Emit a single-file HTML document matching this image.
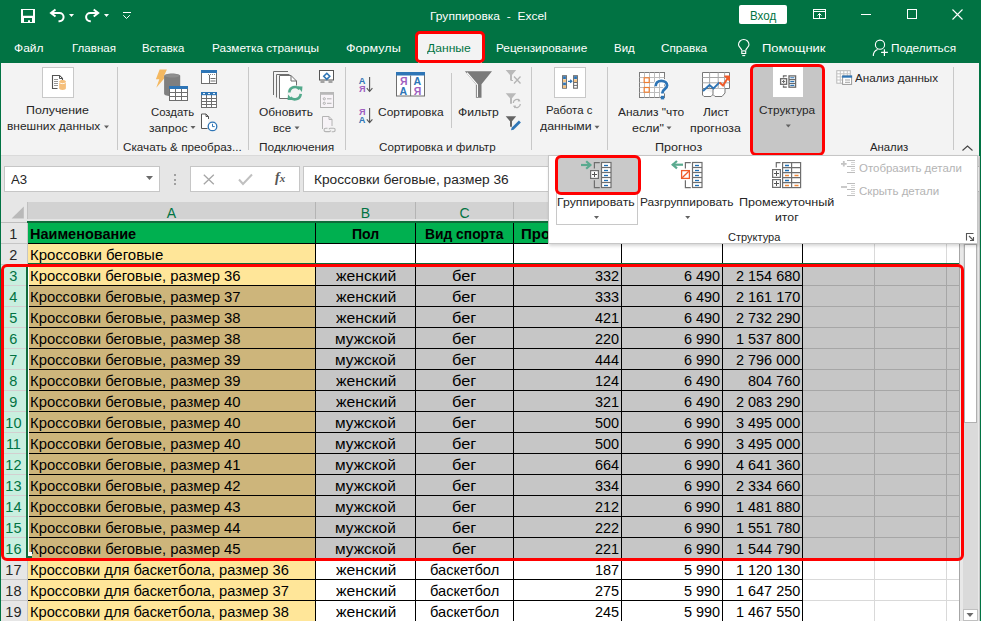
<!DOCTYPE html><html><head><meta charset="utf-8"><style>
html,body{margin:0;padding:0}
body{width:981px;height:621px;overflow:hidden;position:relative;background:#017343;font-family:"Liberation Sans",sans-serif}
.t{position:absolute;white-space:nowrap;line-height:1;font-family:"Liberation Sans",sans-serif}
svg{overflow:visible}
</style></head><body>
<svg style="position:absolute;left:0px;top:0px" width="140" height="30" viewBox="0 0 140 30"><path fill="#fff" fill-rule="evenodd" d="M21 9h14v14H21z M23 10h10v5.7H23z M24 18h8v4h-2v-1.8h-2V22h-4z"/><path d="M55.5 9.5L51 13l4.5 3.5M51 13h8.5a4.1 4.1 0 0 1 0 8.2H58.5" fill="none" stroke="#fff" stroke-width="2"/><path d="M69 14h5l-2.5 3z" fill="#fff"/><path d="M93.7 9.5L98.2 13l-4.5 3.5M98.2 13h-8a4.1 4.1 0 0 0 0 8.2H90.8" fill="none" stroke="#fff" stroke-width="2"/><path d="M104 14h5l-2.5 3z" fill="#fff"/><path d="M123 12.5h8" stroke="#fff" stroke-width="1"/><path d="M123.3 15.2l3.2 3.3 3.3-3.3" fill="none" stroke="#fff" stroke-width="1"/></svg>
<div class="t" style="left:430.41px;top:10.50px;font-size:11px;color:#fff;font-weight:400;transform:scaleX(1.0918);transform-origin:0 0;">Группировка&nbsp;&nbsp;-&nbsp;&nbsp;Excel</div>
<div style="position:absolute;left:739px;top:5px;width:48px;height:19px;background:#fff;border-radius:2px"></div>
<div class="t" style="left:749.55px;top:10.00px;font-size:12.5px;color:#017343;font-weight:400;transform:scaleX(0.9241);transform-origin:0 0;">Вход</div>
<svg style="position:absolute;left:813px;top:9px" width="14" height="11" viewBox="0 0 14 11"><rect x="0.5" y="0.5" width="12" height="9" fill="none" stroke="#fff" stroke-width="1"/><path d="M0.5 2.5h12" stroke="#fff"/><path d="M6.5 9V4.5M4.5 6.5l2-2 2 2" fill="none" stroke="#fff"/></svg>
<div style="position:absolute;left:861px;top:14px;width:10px;height:1px;background:#fff"></div>
<div style="position:absolute;left:907px;top:9px;width:10px;height:10px;border:1px solid #fff;box-sizing:border-box"></div>
<svg style="position:absolute;left:952px;top:9px" width="12" height="11" viewBox="0 0 12 11"><path d="M0.5 0.5l10 10M10.5 0.5l-10 10" stroke="#fff" stroke-width="1.1"/></svg>
<div class="t" style="left:14.01px;top:43.00px;font-size:11.5px;color:#fff;font-weight:400;transform:scaleX(1.0443);transform-origin:0 0;">Файл</div>
<div class="t" style="left:71.65px;top:43.00px;font-size:11.5px;color:#fff;font-weight:400;transform:scaleX(1.0053);transform-origin:0 0;">Главная</div>
<div class="t" style="left:142.37px;top:43.00px;font-size:11.5px;color:#fff;font-weight:400;transform:scaleX(0.9910);transform-origin:0 0;">Вставка</div>
<div class="t" style="left:211.53px;top:43.00px;font-size:11.5px;color:#fff;font-weight:400;transform:scaleX(1.0249);transform-origin:0 0;">Разметка страницы</div>
<div class="t" style="left:345.78px;top:43.00px;font-size:11.5px;color:#fff;font-weight:400;transform:scaleX(1.0923);transform-origin:0 0;">Формулы</div>
<div class="t" style="left:496.33px;top:43.00px;font-size:11.5px;color:#fff;font-weight:400;transform:scaleX(1.0271);transform-origin:0 0;">Рецензирование</div>
<div class="t" style="left:614.26px;top:43.00px;font-size:11.5px;color:#fff;font-weight:400;transform:scaleX(0.9967);transform-origin:0 0;">Вид</div>
<div class="t" style="left:661.30px;top:43.00px;font-size:11.5px;color:#fff;font-weight:400;transform:scaleX(1.0231);transform-origin:0 0;">Справка</div>
<div class="t" style="left:762.35px;top:43.00px;font-size:11.5px;color:#fff;font-weight:400;transform:scaleX(1.1291);transform-origin:0 0;">Помощник</div>
<div class="t" style="left:891.35px;top:43.00px;font-size:11.5px;color:#fff;font-weight:400;transform:scaleX(1.0239);transform-origin:0 0;">Поделиться</div>
<div style="position:absolute;left:418px;top:34px;width:64px;height:29px;background:#f3f3f3"></div>
<div class="t" style="left:427.11px;top:43.00px;font-size:11.5px;color:#017343;font-weight:400;transform:scaleX(1.0549);transform-origin:0 0;">Данные</div>
<div style="position:absolute;left:415px;top:31px;width:70px;height:32px;border:3px solid #f00;border-radius:5px;box-sizing:border-box"></div>
<svg style="position:absolute;left:736px;top:38px" width="15" height="20" viewBox="736 38 15 20"><path d="M741.8 50.3c-.8-2.3-3.3-3.6-3.3-5.6a5.25 5.25 0 0 1 10.5 0c0 2-2.5 3.3-3.3 5.6" fill="none" stroke="#fff" stroke-width="1.1"/><rect x="741.8" y="50.9" width="3.9" height="2.6" fill="none" stroke="#fff" stroke-width="1.1"/><path d="M742.3 55.6h2.9" stroke="#fff" stroke-width="1.1"/></svg>
<svg style="position:absolute;left:871px;top:38px" width="19" height="20" viewBox="871 38 19 20"><circle cx="880" cy="44.7" r="4.6" fill="none" stroke="#fff" stroke-width="1.1"/><path d="M877.6 49.4c-2.6.9-4.3 3.3-4.3 6.6" fill="none" stroke="#fff" stroke-width="1.1"/><path d="M881.1 52.4h6.8M884.4 49.3v6.6" stroke="#fff" stroke-width="1.2"/></svg>
<div style="position:absolute;left:1px;top:63px;width:978px;height:92px;background:#f3f3f3"></div>
<div style="position:absolute;left:1px;top:155px;width:978px;height:1px;background:#dadada"></div>
<div style="position:absolute;left:117px;top:67px;width:1px;height:83px;background:#c8c8c8"></div>
<div style="position:absolute;left:248px;top:67px;width:1px;height:83px;background:#c8c8c8"></div>
<div style="position:absolute;left:345px;top:67px;width:1px;height:83px;background:#c8c8c8"></div>
<div style="position:absolute;left:531px;top:67px;width:1px;height:83px;background:#c8c8c8"></div>
<div style="position:absolute;left:607px;top:67px;width:1px;height:83px;background:#c8c8c8"></div>
<div style="position:absolute;left:953px;top:67px;width:1px;height:83px;background:#c8c8c8"></div>
<div style="position:absolute;left:451px;top:73px;width:1px;height:55px;background:#c8c8c8"></div>
<div style="position:absolute;left:42px;top:67px;width:32px;height:31px;background:#fff;border:1.5px solid #c8c8c8;box-sizing:border-box"></div>
<svg style="position:absolute;left:50px;top:73px" width="18" height="18" viewBox="50 73 18 18"><path d="M57.5 88.5H52.5V75.5h7l3 3V80" fill="#fff" stroke="#555" stroke-width="1.1"/><path d="M59.5 75.5v3h3z" fill="#fff" stroke="#555" stroke-width="1"/><path d="M54 79.5h4M54 81.5h4M54 83.5h4M54 85.5h4" stroke="#8c8c8c" stroke-width="0.9"/><path d="M59.2 81.5c0-1 1.5-1.6 3.35-1.6s3.35.6 3.35 1.6v6.8c0 1-1.5 1.6-3.35 1.6s-3.35-.6-3.35-1.6z" fill="#f5bf7b"/><path d="M59.4 82.6c.6.7 1.7 1 3.15 1s2.6-.3 3.15-1" fill="none" stroke="#fff" stroke-width="0.9"/></svg>
<div class="t" style="left:26.40px;top:105.00px;font-size:11.5px;color:#262626;font-weight:400;transform:scaleX(1.0762);transform-origin:0 0;">Получение</div>
<div class="t" style="left:6.87px;top:121.00px;font-size:11.5px;color:#262626;font-weight:400;transform:scaleX(1.0405);transform-origin:0 0;">внешних данных</div>
<svg style="position:absolute;left:104px;top:125px" width="6" height="4" viewBox="104 125 6 4"><path d="M104 125.5h5l-2.5 3z" fill="#616161"/></svg>
<div class="t" style="left:122.81px;top:142.00px;font-size:11.5px;color:#262626;font-weight:400;transform:scaleX(1.0168);transform-origin:0 0;">Скачать &amp; преобраз...</div>
<svg style="position:absolute;left:155px;top:68px" width="36" height="34" viewBox="155 68 36 34"><path d="M159.6 69.5h7.3l-3.2 7h2.2l-9.6 11.2 3-8.5h-3.4z" fill="#f4b860"/><path d="M164.1 75.8c0-1.4 3.6-2.4 8.05-2.4s8.05 1 8.05 2.4v18c0 1.4-3.6 2.4-8.05 2.4s-8.05-1-8.05-2.4z" fill="#7f7f7f"/><ellipse cx="172.15" cy="75.8" rx="7.2" ry="1.7" fill="#8e8e8e"/><rect x="169.5" y="86.5" width="18" height="14" fill="#fff" stroke="#6e6e6e"/><rect x="169" y="86" width="19" height="3" fill="#2e75b6"/><path d="M169.5 92.5h18M169.5 96.5h18M175.5 89v11.5M181.5 89v11.5" stroke="#6e6e6e" stroke-width="1"/></svg>
<div class="t" style="left:150.72px;top:106.50px;font-size:11.5px;color:#262626;font-weight:400;transform:scaleX(0.9865);transform-origin:0 0;">Создать</div>
<div class="t" style="left:148.61px;top:123.00px;font-size:11.5px;color:#262626;font-weight:400;transform:scaleX(1.0569);transform-origin:0 0;">запрос</div>
<svg style="position:absolute;left:190px;top:125px" width="6" height="4" viewBox="190 125 6 4"><path d="M190.5 126h5l-2.5 3z" fill="#616161"/></svg>
<svg style="position:absolute;left:200px;top:69px" width="19" height="64" viewBox="200 69 19 64"><rect x="201.5" y="70.5" width="15" height="13" fill="#fff" stroke="#6e6e6e"/><rect x="201" y="70" width="16" height="3" fill="#2e75b6"/><path d="M209.5 75v8.5M210.5 78.5h5M210.5 81h5" stroke="#6e6e6e"/><path d="M208 74.5h1M210 74.5h1M212 74.5h1M214 74.5h1" stroke="#8a8a8a"/><rect x="201.5" y="92.5" width="15" height="15" fill="#fff" stroke="#6e6e6e"/><rect x="201" y="92" width="16" height="3.2" fill="#2e75b6"/><path d="M203 93.6h2M208 93.6h2M213 93.6h2" stroke="#fff" stroke-width="1"/><path d="M201.5 98.5h15M201.5 101.5h15M201.5 104.5h15M206.5 95v12.5M211.5 95v12.5" stroke="#6e6e6e"/><path d="M208.5 119V116.5l-2.5-2.5h-4.5v14.5h6" fill="#fff" stroke="#555"/><path d="M206 114v2.5h2.5" fill="none" stroke="#555"/><circle cx="212.5" cy="126.4" r="4.3" fill="#fff" stroke="#2e75b6" stroke-width="1.3"/><path d="M212.5 123.8v2.8h2.2" fill="none" stroke="#2e75b6" stroke-width="1"/></svg>
<svg style="position:absolute;left:270px;top:69px" width="36" height="34" viewBox="270 69 36 34"><path d="M273.5 95V71.5h14.5" fill="none" stroke="#6e6e6e"/><path d="M276.5 97.5V74.5h13" fill="none" stroke="#6e6e6e"/><path d="M279.5 98.5V75.5h11.5l5.5 5.5v17.5z" fill="#fff" stroke="#6e6e6e"/><path d="M291 75.5v5.5h5.5" fill="none" stroke="#6e6e6e"/><circle cx="295" cy="93.2" r="8" fill="#f3f3f3"/><path d="M289.3 92.5a5.8 5.8 0 0 1 10.3-3.3" fill="none" stroke="#52a98b" stroke-width="2.6"/><path d="M300.7 93.9a5.8 5.8 0 0 1-10.3 3.3" fill="none" stroke="#52a98b" stroke-width="2.6"/><path d="M297.3 86.3l5.2 .2-.6 5.4z" fill="#52a98b"/><path d="M292.7 100.1l-5.2-.2.6-5.4z" fill="#52a98b"/></svg>
<div class="t" style="left:259.04px;top:106.50px;font-size:11.5px;color:#262626;font-weight:400;transform:scaleX(1.0362);transform-origin:0 0;">Обновить</div>
<div class="t" style="left:273.00px;top:123.00px;font-size:11.5px;color:#262626;font-weight:400;transform:scaleX(0.9972);transform-origin:0 0;">все</div>
<svg style="position:absolute;left:294px;top:125px" width="6" height="5" viewBox="294 125 6 5"><path d="M294.5 126.5h5l-2.5 3z" fill="#616161"/></svg>
<svg style="position:absolute;left:318px;top:69px" width="19" height="64" viewBox="318 69 19 64"><rect x="319.5" y="70.5" width="14" height="9.5" fill="#fff" stroke="#555"/><path d="M320.5 82h4M328.5 82h4" stroke="#555" stroke-width="1.2"/><path d="M326.8 73.3l3 3-3 3-3-3z" fill="none" stroke="#2e75b6" stroke-width="1.6"/><rect x="320.5" y="92.5" width="13" height="15" fill="#f7f3f7" stroke="#b4b4b4"/><rect x="320" y="92" width="14" height="2.8" fill="#b8b8b8"/><circle cx="324.3" cy="98.8" r="1.1" fill="none" stroke="#b0b0b0"/><circle cx="324.3" cy="103.3" r="1.1" fill="none" stroke="#b0b0b0"/><path d="M327 98.8h4.5M327 103.3h4.5" stroke="#b0b0b0"/><path d="M322.5 129V116.5h6.5l3 3V126" fill="#f7f3f7" stroke="#b4b4b4"/><path d="M329 116.5v3h3" fill="none" stroke="#b4b4b4"/><path d="M327.5 128.2h-1.8a1.7 1.7 0 0 0 0 3.4h3.6a1.7 1.7 0 0 0 1.5-1M329 129.3a1.7 1.7 0 0 1 1.5-1h3a1.7 1.7 0 0 1 0 3.4h-1.8" fill="none" stroke="#b4b4b4" stroke-width="1.1"/></svg>
<div class="t" style="left:258.64px;top:142.00px;font-size:11.5px;color:#262626;font-weight:400;transform:scaleX(1.0336);transform-origin:0 0;">Подключения</div>
<div class="t" style="left:358.8px;top:77.2px;font-size:9.2px;font-weight:700;color:#2e75b6">A</div>
<div class="t" style="left:359.0px;top:85.0px;font-size:9.2px;font-weight:700;color:#9f5fbf">Я</div>
<div class="t" style="left:359.0px;top:108.0px;font-size:9.2px;font-weight:700;color:#9f5fbf">Я</div>
<div class="t" style="left:358.8px;top:116.4px;font-size:9.2px;font-weight:700;color:#2e75b6">A</div>
<svg style="position:absolute;left:365px;top:75px" width="10" height="50" viewBox="365 75 10 50"><path d="M369.6 77v14.3M366.8 88.2l2.8 3.3 2.8-3.3" fill="none" stroke="#555" stroke-width="1.1"/><path d="M369.6 108v14.6M366.8 119.4l2.8 3.3 2.8-3.3" fill="none" stroke="#555" stroke-width="1.1"/></svg>
<svg style="position:absolute;left:395px;top:71px" width="32" height="27" viewBox="395 71 32 27"><rect x="396.5" y="72.5" width="28" height="23.5" fill="#fff" stroke="#6e6e6e"/><rect x="396" y="72" width="29" height="3.5" fill="#2e75b6"/><path d="M410.6 75.5v20.5" stroke="#6e6e6e"/></svg>
<div class="t" style="left:399.9px;top:75.6px;font-size:10.5px;font-weight:700;color:#9f5fbf">Я</div>
<div class="t" style="left:399.5px;top:86.3px;font-size:10.5px;font-weight:700;color:#2e75b6">A</div>
<div class="t" style="left:413.4px;top:75.6px;font-size:10.5px;font-weight:700;color:#2e75b6">A</div>
<div class="t" style="left:413.8px;top:86.3px;font-size:10.5px;font-weight:700;color:#9f5fbf">Я</div>
<div class="t" style="left:378.09px;top:106.80px;font-size:11.5px;color:#262626;font-weight:400;transform:scaleX(1.0395);transform-origin:0 0;">Сортировка</div>
<svg style="position:absolute;left:463px;top:69px" width="32" height="31" viewBox="463 69 32 31"><path d="M464.9 71.2H492L481.5 84.2v13.5h-5.6V84.2z" fill="#7a7a7a"/><path d="M467 72.6l10.4 12.2V97" fill="none" stroke="#fff" stroke-width="1.1"/></svg>
<div class="t" style="left:457.70px;top:106.80px;font-size:11.5px;color:#262626;font-weight:400;transform:scaleX(1.0577);transform-origin:0 0;">Фильтр</div>
<svg style="position:absolute;left:504px;top:69px" width="19" height="64" viewBox="504 69 19 64"><path d="M505.7 70h10.5l-4.2 5v5.5h-2V75z" fill="#b9b9b9"/><path d="M511 80.5h2" stroke="#b9b9b9"/><path d="M514 76.5l6.5 7M520.5 76.5l-6.5 7" stroke="#b4b4b4" stroke-width="1.3"/><path d="M505.7 93.2h10.5l-4.2 5v5.5h-2v-5.5z" fill="#b9b9b9"/><path d="M513.3 103a3.6 3.6 0 0 1 6.3-2.3M520.3 104a3.6 3.6 0 0 1-6.3 2.3" fill="none" stroke="#b4b4b4" stroke-width="1.3"/><path d="M518.6 98.6l2 2.6-2.9.4zM515 108.4l-2-2.6 2.9-.4z" fill="#b4b4b4"/><path d="M505.7 116.3h10.5l-4.2 5v5.5h-2v-5.5z" fill="#646464"/><path d="M511 130.3l.6-2.6 7.3-7.3 2 2-7.3 7.3z" fill="#2e75b6"/></svg>
<div class="t" style="left:378.91px;top:142.00px;font-size:11.5px;color:#262626;font-weight:400;transform:scaleX(1.0121);transform-origin:0 0;">Сортировка и фильтр</div>
<div style="position:absolute;left:554px;top:67px;width:32px;height:31px;background:#fff;border:1.5px solid #c8c8c8;box-sizing:border-box"></div>
<svg style="position:absolute;left:560px;top:73px" width="20" height="18" viewBox="560 73 20 18"><rect x="562.6" y="75.7" width="3.8" height="12.5" fill="#fff" stroke="#6e6e6e" stroke-width="1.1"/><rect x="563.1" y="76.2" width="2.8" height="2.8" fill="#2e75b6"/><rect x="563.1" y="79.4" width="2.8" height="2.8" fill="#f5bf7b"/><rect x="563.1" y="82.6" width="2.8" height="2.8" fill="#2e75b6"/><rect x="563.1" y="85.4" width="2.8" height="2.6" fill="#f5bf7b"/><rect x="573.6" y="75.7" width="3.8" height="12.5" fill="#fff" stroke="#6e6e6e" stroke-width="1.1"/><rect x="574.1" y="76.2" width="2.8" height="2.8" fill="#2e75b6"/><rect x="574.1" y="79.4" width="2.8" height="2.8" fill="#f5bf7b"/><path d="M573.6 82.5h3.8M573.6 85.4h3.8" stroke="#6e6e6e"/><path d="M568 81.3h3.5M570.2 79.8l1.6 1.5-1.6 1.5" fill="none" stroke="#2e75b6" stroke-width="1.2"/></svg>
<div class="t" style="left:545.57px;top:105.00px;font-size:11.5px;color:#262626;font-weight:400;transform:scaleX(0.9890);transform-origin:0 0;">Работа с</div>
<div class="t" style="left:539.88px;top:121.00px;font-size:11.5px;color:#262626;font-weight:400;transform:scaleX(1.0675);transform-origin:0 0;">данными</div>
<svg style="position:absolute;left:594px;top:125px" width="6" height="4" viewBox="594 125 6 4"><path d="M594.5 125.8h5l-2.5 3z" fill="#616161"/></svg>
<svg style="position:absolute;left:637px;top:70px" width="34" height="33" viewBox="637 70 34 33"><rect x="639.5" y="72.5" width="25" height="25" fill="#fff" stroke="#7a7a7a"/><path d="M639.5 77.5h25M639.5 82.5h25M639.5 87.5h25M639.5 92.5h25M644.5 72.5v25M649.5 72.5v25M654.5 72.5v25M659.5 72.5v25" stroke="#bdbdbd"/><rect x="644.2" y="77.8" width="5" height="4.7" fill="#fff" stroke="#ed7d31" stroke-width="1.2"/><rect x="644.2" y="87.5" width="5" height="4.7" fill="#fff" stroke="#ed7d31" stroke-width="1.2"/><path d="M655.6 86.2c0-3.4 2.5-5.4 5.7-5.4 3.3 0 5.8 2 5.8 4.8 0 3.4-4.6 3.6-4.6 6.9v1" fill="none" stroke="#fff" stroke-width="4.6"/><path d="M655.6 86.2c0-3.4 2.5-5.4 5.7-5.4 3.3 0 5.8 2 5.8 4.8 0 3.4-4.6 3.6-4.6 6.9v1" fill="none" stroke="#2e75b6" stroke-width="2.8"/><rect x="660.8" y="95.8" width="3.4" height="3.6" fill="#2e75b6"/></svg>
<div class="t" style="left:618.38px;top:106.80px;font-size:11.5px;color:#262626;font-weight:400;transform:scaleX(1.0403);transform-origin:0 0;">Анализ "что</div>
<div class="t" style="left:632.07px;top:123.00px;font-size:11.5px;color:#262626;font-weight:400;transform:scaleX(1.0851);transform-origin:0 0;">если"</div>
<svg style="position:absolute;left:666px;top:126px" width="6" height="4" viewBox="666 126 6 4"><path d="M666.5 126.5h5l-2.5 3z" fill="#616161"/></svg>
<svg style="position:absolute;left:701px;top:71px" width="31" height="28" viewBox="701 71 31 28"><path d="M702.5 72.5h27v16h-27z" fill="#fff" stroke="#777"/><path d="M702.5 77.5h27M702.5 82.8h27M709.6 72.5v16M718.2 72.5v16M724.6 72.5v16" stroke="#a8a8a8"/><path d="M702.5 88.5v6.5l1.5 1.5h7l2.5-2.5h1.5" fill="#fff" stroke="#777"/><path d="M713 88.5v6l2 2h7l3-3.5V88.5" fill="#fff" stroke="#777"/><path d="M703 91l6.5-6 4 3.4 6-6" fill="none" stroke="#2e75b6" stroke-width="2"/><path d="M719.5 82.5l3.5 3 5.5-8.5" fill="none" stroke="#f05a28" stroke-width="2"/><path d="M724.5 76h5v5z" fill="#f05a28" stroke="#f05a28" stroke-width="1"/></svg>
<div class="t" style="left:703.09px;top:107.00px;font-size:11.5px;color:#262626;font-weight:400;transform:scaleX(1.0409);transform-origin:0 0;">Лист</div>
<div class="t" style="left:689.85px;top:123.00px;font-size:11.5px;color:#262626;font-weight:400;transform:scaleX(1.0698);transform-origin:0 0;">прогноза</div>
<div class="t" style="left:655.38px;top:142.00px;font-size:11.5px;color:#262626;font-weight:400;transform:scaleX(1.0953);transform-origin:0 0;">Прогноз</div>
<div style="position:absolute;left:750px;top:64px;width:75px;height:92px;background:#c6c6c6;border:3px solid #f00;border-radius:6px;box-sizing:border-box"></div>
<div style="position:absolute;left:773px;top:67px;width:30px;height:30px;background:#fff"></div>
<svg style="position:absolute;left:778px;top:73px" width="20" height="17" viewBox="778 73 20 17"><rect x="780.6" y="78.7" width="6" height="5.6" fill="#fff" stroke="#6a6a6a" stroke-width="1.3"/><path d="M783.6 79.9v3.2M782 81.5h3.2" stroke="#6a6a6a" stroke-width="1.1"/><path d="M786.8 75.8h-3.3v1.8M783.5 85.5v1.7h3.3" fill="none" stroke="#6a6a6a" stroke-width="1.3"/><rect x="789" y="75.9" width="6.6" height="11.3" fill="#fff" stroke="#6a6a6a" stroke-width="1.3"/><path d="M789 79.7h6.6M789 83.5h6.6" stroke="#6a6a6a" stroke-width="1.2"/><path d="M790.3 77.8h4M790.3 81.6h4M790.3 85.4h4" stroke="#2e75b6" stroke-width="1.1"/></svg>
<div class="t" style="left:759.40px;top:105.00px;font-size:11.5px;color:#262626;font-weight:400;transform:scaleX(1.0283);transform-origin:0 0;">Структура</div>
<svg style="position:absolute;left:785px;top:124px" width="7" height="4" viewBox="785 124 7 4"><path d="M785.8 124.5h5l-2.5 3z" fill="#616161"/></svg>
<svg style="position:absolute;left:835px;top:69px" width="19" height="17" viewBox="835 69 19 17"><rect x="836.8" y="70.7" width="13.5" height="12.5" fill="#fff" stroke="#b8b8b8"/><path d="M836.8 73.8h13.5M836.8 76.9h13.5M836.8 80h13.5M840.3 70.7v12.5M843.8 70.7v12.5M847.3 70.7v12.5" stroke="#c4c4c4"/><rect x="842.6" y="76" width="9" height="8.4" fill="#fff" stroke="#999"/><rect x="842.1" y="75.5" width="10" height="2.2" fill="#2e75b6"/><path d="M845 80h5M845 82.3h5" stroke="#999" stroke-width="0.9"/></svg>
<div class="t" style="left:855.28px;top:72.70px;font-size:11.5px;color:#262626;font-weight:400;transform:scaleX(1.0147);transform-origin:0 0;">Анализ данных</div>
<div class="t" style="left:869.98px;top:142.00px;font-size:11.5px;color:#262626;font-weight:400;transform:scaleX(0.9852);transform-origin:0 0;">Анализ</div>
<svg style="position:absolute;left:960px;top:144px" width="15" height="9" viewBox="960 144 15 9"><path d="M962.5 150.5l5-4.5 5 4.5" fill="none" stroke="#444" stroke-width="1.1"/></svg>
<div style="position:absolute;left:1px;top:156px;width:978px;height:46px;background:#e6e6e6"></div>
<div style="position:absolute;left:4px;top:166px;width:156px;height:26px;background:#fff;border:1px solid #c6c6c6;box-sizing:border-box"></div>
<div class="t" style="left:11.27px;top:173.80px;font-size:12px;color:#262626;font-weight:400;transform:scaleX(1.0972);transform-origin:0 0;">A3</div>
<svg style="position:absolute;left:146px;top:176px" width="8" height="4" viewBox="0 0 8 4"><path d="M0 0h7l-3.5 4z" fill="#6a6a6a"/></svg>
<div style="position:absolute;left:174px;top:174px;width:2px;height:2px;background:#a0a0a0"></div>
<div style="position:absolute;left:174px;top:178.5px;width:2px;height:2px;background:#a0a0a0"></div>
<div style="position:absolute;left:174px;top:183px;width:2px;height:2px;background:#a0a0a0"></div>
<div style="position:absolute;left:190px;top:166px;width:110px;height:26px;background:#fff;border:1px solid #c6c6c6;box-sizing:border-box"></div>
<svg style="position:absolute;left:203px;top:174px" width="12" height="11" viewBox="0 0 12 11"><path d="M0.8 0.8l10 9.5M10.8 0.8l-10 9.5" stroke="#a6a6a6" stroke-width="1.3"/></svg>
<svg style="position:absolute;left:238px;top:174px" width="15" height="11" viewBox="0 0 15 11"><path d="M1 5.5l4 4.5 9-9.5" fill="none" stroke="#c0c0c0" stroke-width="2"/></svg>
<div class="t" style="left:275px;top:170.5px;font-family:'Liberation Serif';font-style:italic;font-weight:700;font-size:14px;color:#555">f<span style="font-size:11px">x</span></div>
<div style="position:absolute;left:303px;top:166px;width:676px;height:26px;background:#fff;border:1px solid #c6c6c6;border-right:none;box-sizing:border-box"></div>
<div class="t" style="left:314.17px;top:173.70px;font-size:12.3px;color:#262626;font-weight:400;transform:scaleX(1.1155);transform-origin:0 0;">Кроссовки беговые, размер 36</div>
<div style="position:absolute;left:1px;top:202px;width:978px;height:419px;background:#fff"></div>
<div style="position:absolute;left:27px;top:202px;width:933px;height:19px;background:#d2d2d2"></div>
<div style="position:absolute;left:1px;top:202px;width:26px;height:21px;background:#e6e6e6"></div>
<div style="position:absolute;left:1px;top:222px;width:26px;height:1px;background:#bdbdbd"></div>
<svg style="position:absolute;left:11px;top:206px" width="14" height="14" viewBox="11 206 14 14"><path d="M23.8 206.4v12.2H11.6z" fill="#b9b9b9"/></svg>
<div style="position:absolute;left:27px;top:202px;width:1px;height:21px;background:#c0c0c0"></div>
<div style="position:absolute;left:315px;top:202px;width:1px;height:19px;background:#b4b4b4"></div>
<div class="t" style="left:-28.5px;width:400px;text-align:center;top:206.00px;font-size:14px;color:#017343;font-weight:400;">A</div>
<div style="position:absolute;left:415px;top:202px;width:1px;height:19px;background:#b4b4b4"></div>
<div class="t" style="left:165.5px;width:400px;text-align:center;top:206.00px;font-size:14px;color:#017343;font-weight:400;">B</div>
<div style="position:absolute;left:513px;top:202px;width:1px;height:19px;background:#b4b4b4"></div>
<div class="t" style="left:264.5px;width:400px;text-align:center;top:206.00px;font-size:14px;color:#017343;font-weight:400;">C</div>
<div style="position:absolute;left:621px;top:202px;width:1px;height:19px;background:#b4b4b4"></div>
<div class="t" style="left:367.5px;width:400px;text-align:center;top:206.00px;font-size:14px;color:#017343;font-weight:400;">D</div>
<div style="position:absolute;left:722px;top:202px;width:1px;height:19px;background:#b4b4b4"></div>
<div class="t" style="left:472.0px;width:400px;text-align:center;top:206.00px;font-size:14px;color:#017343;font-weight:400;">E</div>
<div style="position:absolute;left:802px;top:202px;width:1px;height:19px;background:#b4b4b4"></div>
<div class="t" style="left:562.5px;width:400px;text-align:center;top:206.00px;font-size:14px;color:#017343;font-weight:400;">F</div>
<div style="position:absolute;left:874px;top:202px;width:1px;height:19px;background:#b4b4b4"></div>
<div class="t" style="left:638.5px;width:400px;text-align:center;top:206.00px;font-size:14px;color:#017343;font-weight:400;">G</div>
<div style="position:absolute;left:946px;top:202px;width:1px;height:19px;background:#b4b4b4"></div>
<div class="t" style="left:710.5px;width:400px;text-align:center;top:206.00px;font-size:14px;color:#017343;font-weight:400;">H</div>
<div style="position:absolute;left:959px;top:202px;width:1px;height:19px;background:#b4b4b4"></div>
<div class="t" style="left:753.0px;width:400px;text-align:center;top:206.00px;font-size:14px;color:#017343;font-weight:400;">I</div>
<div style="position:absolute;left:27px;top:219px;width:933px;height:2px;background:#e4e4e4"></div>
<div style="position:absolute;left:27px;top:221px;width:933px;height:2px;background:#0f6b3a"></div>
<div style="position:absolute;left:1px;top:223px;width:26px;height:21px;background:#e6e6e6"></div>
<div style="position:absolute;left:1px;top:243px;width:26px;height:1px;background:#c6c6c6"></div>
<div style="position:absolute;left:27px;top:223px;width:1px;height:21px;background:#c6c6c6"></div>
<div class="t" style="left:-186.6px;width:400px;text-align:center;top:227.00px;font-size:14.5px;color:#262626;font-weight:400;">1</div>
<div style="position:absolute;left:28px;top:223px;width:288px;height:21px;background:#00b050"></div>
<div style="position:absolute;left:316px;top:223px;width:100px;height:21px;background:#00b050"></div>
<div style="position:absolute;left:416px;top:223px;width:98px;height:21px;background:#00b050"></div>
<div style="position:absolute;left:514px;top:223px;width:108px;height:21px;background:#00b050"></div>
<div style="position:absolute;left:622px;top:223px;width:101px;height:21px;background:#00b050"></div>
<div style="position:absolute;left:723px;top:223px;width:80px;height:21px;background:#00b050"></div>
<div style="position:absolute;left:803px;top:223px;width:72px;height:21px;background:#fff"></div>
<div style="position:absolute;left:875px;top:223px;width:72px;height:21px;background:#fff"></div>
<div style="position:absolute;left:947px;top:223px;width:13px;height:21px;background:#fff"></div>
<div style="position:absolute;left:803px;top:243px;width:157px;height:1px;background:#d9d9d9"></div>
<div style="position:absolute;left:874px;top:223px;width:1px;height:21px;background:#d9d9d9"></div>
<div style="position:absolute;left:946px;top:223px;width:1px;height:21px;background:#d9d9d9"></div>
<div style="position:absolute;left:959px;top:223px;width:1px;height:21px;background:#d9d9d9"></div>
<div style="position:absolute;left:28px;top:243px;width:775px;height:1px;background:#000"></div>
<div style="position:absolute;left:315px;top:223px;width:1px;height:21px;background:#000"></div>
<div style="position:absolute;left:415px;top:223px;width:1px;height:21px;background:#000"></div>
<div style="position:absolute;left:513px;top:223px;width:1px;height:21px;background:#000"></div>
<div style="position:absolute;left:621px;top:223px;width:1px;height:21px;background:#000"></div>
<div style="position:absolute;left:722px;top:223px;width:1px;height:21px;background:#000"></div>
<div style="position:absolute;left:802px;top:223px;width:1px;height:21px;background:#000"></div>
<div class="t" style="left:29.63px;top:226.00px;font-size:15px;font-weight:700;color:#000;transform:scaleX(0.9648);transform-origin:0 0">Наименование</div>
<div class="t" style="left:351.86px;top:226.00px;font-size:15px;font-weight:700;color:#000;transform:scaleX(0.9372);transform-origin:0 0">Пол</div>
<div class="t" style="left:424.57px;top:226.00px;font-size:15px;font-weight:700;color:#000;transform:scaleX(0.9222);transform-origin:0 0">Вид спорта</div>
<div class="t" style="left:521.00px;top:226.00px;font-size:15px;font-weight:700;color:#000;transform:scaleX(1.0000);transform-origin:0 0">Продажи</div>
<div style="position:absolute;left:1px;top:244px;width:26px;height:21px;background:#e6e6e6"></div>
<div style="position:absolute;left:1px;top:264px;width:26px;height:1px;background:#c6c6c6"></div>
<div style="position:absolute;left:27px;top:244px;width:1px;height:21px;background:#c6c6c6"></div>
<div class="t" style="left:-186.6px;width:400px;text-align:center;top:248.00px;font-size:14.5px;color:#262626;font-weight:400;">2</div>
<div style="position:absolute;left:28px;top:244px;width:288px;height:21px;background:#ffe699"></div>
<div style="position:absolute;left:316px;top:244px;width:100px;height:21px;background:#fff"></div>
<div style="position:absolute;left:416px;top:244px;width:98px;height:21px;background:#fff"></div>
<div style="position:absolute;left:514px;top:244px;width:108px;height:21px;background:#fff"></div>
<div style="position:absolute;left:622px;top:244px;width:101px;height:21px;background:#fff"></div>
<div style="position:absolute;left:723px;top:244px;width:80px;height:21px;background:#fff"></div>
<div style="position:absolute;left:803px;top:244px;width:72px;height:21px;background:#fff"></div>
<div style="position:absolute;left:875px;top:244px;width:72px;height:21px;background:#fff"></div>
<div style="position:absolute;left:947px;top:244px;width:13px;height:21px;background:#fff"></div>
<div style="position:absolute;left:803px;top:264px;width:157px;height:1px;background:#d9d9d9"></div>
<div style="position:absolute;left:874px;top:244px;width:1px;height:21px;background:#d9d9d9"></div>
<div style="position:absolute;left:946px;top:244px;width:1px;height:21px;background:#d9d9d9"></div>
<div style="position:absolute;left:959px;top:244px;width:1px;height:21px;background:#d9d9d9"></div>
<div style="position:absolute;left:28px;top:264px;width:775px;height:1px;background:#000"></div>
<div style="position:absolute;left:315px;top:244px;width:1px;height:21px;background:#000"></div>
<div style="position:absolute;left:415px;top:244px;width:1px;height:21px;background:#000"></div>
<div style="position:absolute;left:513px;top:244px;width:1px;height:21px;background:#000"></div>
<div style="position:absolute;left:621px;top:244px;width:1px;height:21px;background:#000"></div>
<div style="position:absolute;left:722px;top:244px;width:1px;height:21px;background:#000"></div>
<div style="position:absolute;left:802px;top:244px;width:1px;height:21px;background:#000"></div>
<div class="t" style="left:29.87px;top:247.00px;font-size:15px;font-weight:400;color:#000;transform:scaleX(0.9990);transform-origin:0 0">Кроссовки беговые</div>
<div style="position:absolute;left:1px;top:265px;width:26px;height:21px;background:#c9efdf"></div>
<div style="position:absolute;left:1px;top:285px;width:26px;height:1px;background:#d3cfd0"></div>
<div style="position:absolute;left:27px;top:265px;width:1px;height:21px;background:#c6c6c6"></div>
<div class="t" style="left:-186.6px;width:400px;text-align:center;top:269.00px;font-size:14.5px;color:#017343;font-weight:400;">3</div>
<div style="position:absolute;left:28px;top:265px;width:288px;height:21px;background:#ffe699"></div>
<div style="position:absolute;left:316px;top:265px;width:100px;height:21px;background:#c6c6c6"></div>
<div style="position:absolute;left:416px;top:265px;width:98px;height:21px;background:#c6c6c6"></div>
<div style="position:absolute;left:514px;top:265px;width:108px;height:21px;background:#c6c6c6"></div>
<div style="position:absolute;left:622px;top:265px;width:101px;height:21px;background:#c6c6c6"></div>
<div style="position:absolute;left:723px;top:265px;width:80px;height:21px;background:#c6c6c6"></div>
<div style="position:absolute;left:803px;top:265px;width:72px;height:21px;background:#c6c6c6"></div>
<div style="position:absolute;left:875px;top:265px;width:72px;height:21px;background:#c6c6c6"></div>
<div style="position:absolute;left:947px;top:265px;width:13px;height:21px;background:#c6c6c6"></div>
<div style="position:absolute;left:803px;top:285px;width:157px;height:1px;background:#a6a6a6"></div>
<div style="position:absolute;left:874px;top:265px;width:1px;height:21px;background:#a6a6a6"></div>
<div style="position:absolute;left:946px;top:265px;width:1px;height:21px;background:#a6a6a6"></div>
<div style="position:absolute;left:959px;top:265px;width:1px;height:21px;background:#a6a6a6"></div>
<div style="position:absolute;left:28px;top:285px;width:775px;height:1px;background:#000"></div>
<div style="position:absolute;left:315px;top:265px;width:1px;height:21px;background:#000"></div>
<div style="position:absolute;left:415px;top:265px;width:1px;height:21px;background:#000"></div>
<div style="position:absolute;left:513px;top:265px;width:1px;height:21px;background:#000"></div>
<div style="position:absolute;left:621px;top:265px;width:1px;height:21px;background:#000"></div>
<div style="position:absolute;left:722px;top:265px;width:1px;height:21px;background:#000"></div>
<div style="position:absolute;left:802px;top:265px;width:1px;height:21px;background:#000"></div>
<div class="t" style="left:29.88px;top:268.00px;font-size:15px;font-weight:400;color:#000;transform:scaleX(0.9890);transform-origin:0 0">Кроссовки беговые, размер 36</div>
<div class="t" style="left:336.00px;top:268.00px;font-size:15px;font-weight:400;color:#000;transform:scaleX(1.0480);transform-origin:0 0">женский</div>
<div class="t" style="left:452.15px;top:268.00px;font-size:15px;font-weight:400;color:#000;transform:scaleX(1.0900);transform-origin:0 0">бег</div>
<div class="t" style="left:594.83px;top:268.00px;font-size:15px;font-weight:400;color:#000;transform:scaleX(0.9630);transform-origin:0 0">332</div>
<div class="t" style="left:683.72px;top:268.00px;font-size:15px;font-weight:400;color:#000;transform:scaleX(0.9630);transform-origin:0 0">6 490</div>
<div class="t" style="left:735.80px;top:268.00px;font-size:15px;font-weight:400;color:#000;transform:scaleX(0.9630);transform-origin:0 0">2 154 680</div>
<div style="position:absolute;left:1px;top:286px;width:26px;height:21px;background:#c9efdf"></div>
<div style="position:absolute;left:1px;top:306px;width:26px;height:1px;background:#d3cfd0"></div>
<div style="position:absolute;left:27px;top:286px;width:1px;height:21px;background:#c6c6c6"></div>
<div class="t" style="left:-186.6px;width:400px;text-align:center;top:290.00px;font-size:14.5px;color:#017343;font-weight:400;">4</div>
<div style="position:absolute;left:28px;top:286px;width:288px;height:21px;background:#cdb57b"></div>
<div style="position:absolute;left:316px;top:286px;width:100px;height:21px;background:#c6c6c6"></div>
<div style="position:absolute;left:416px;top:286px;width:98px;height:21px;background:#c6c6c6"></div>
<div style="position:absolute;left:514px;top:286px;width:108px;height:21px;background:#c6c6c6"></div>
<div style="position:absolute;left:622px;top:286px;width:101px;height:21px;background:#c6c6c6"></div>
<div style="position:absolute;left:723px;top:286px;width:80px;height:21px;background:#c6c6c6"></div>
<div style="position:absolute;left:803px;top:286px;width:72px;height:21px;background:#c6c6c6"></div>
<div style="position:absolute;left:875px;top:286px;width:72px;height:21px;background:#c6c6c6"></div>
<div style="position:absolute;left:947px;top:286px;width:13px;height:21px;background:#c6c6c6"></div>
<div style="position:absolute;left:803px;top:306px;width:157px;height:1px;background:#a6a6a6"></div>
<div style="position:absolute;left:874px;top:286px;width:1px;height:21px;background:#a6a6a6"></div>
<div style="position:absolute;left:946px;top:286px;width:1px;height:21px;background:#a6a6a6"></div>
<div style="position:absolute;left:959px;top:286px;width:1px;height:21px;background:#a6a6a6"></div>
<div style="position:absolute;left:28px;top:306px;width:775px;height:1px;background:#000"></div>
<div style="position:absolute;left:315px;top:286px;width:1px;height:21px;background:#000"></div>
<div style="position:absolute;left:415px;top:286px;width:1px;height:21px;background:#000"></div>
<div style="position:absolute;left:513px;top:286px;width:1px;height:21px;background:#000"></div>
<div style="position:absolute;left:621px;top:286px;width:1px;height:21px;background:#000"></div>
<div style="position:absolute;left:722px;top:286px;width:1px;height:21px;background:#000"></div>
<div style="position:absolute;left:802px;top:286px;width:1px;height:21px;background:#000"></div>
<div class="t" style="left:29.88px;top:289.00px;font-size:15px;font-weight:400;color:#000;transform:scaleX(0.9890);transform-origin:0 0">Кроссовки беговые, размер 37</div>
<div class="t" style="left:336.00px;top:289.00px;font-size:15px;font-weight:400;color:#000;transform:scaleX(1.0480);transform-origin:0 0">женский</div>
<div class="t" style="left:452.15px;top:289.00px;font-size:15px;font-weight:400;color:#000;transform:scaleX(1.0900);transform-origin:0 0">бег</div>
<div class="t" style="left:594.73px;top:289.00px;font-size:15px;font-weight:400;color:#000;transform:scaleX(0.9630);transform-origin:0 0">333</div>
<div class="t" style="left:683.72px;top:289.00px;font-size:15px;font-weight:400;color:#000;transform:scaleX(0.9630);transform-origin:0 0">6 490</div>
<div class="t" style="left:735.80px;top:289.00px;font-size:15px;font-weight:400;color:#000;transform:scaleX(0.9630);transform-origin:0 0">2 161 170</div>
<div style="position:absolute;left:1px;top:307px;width:26px;height:21px;background:#c9efdf"></div>
<div style="position:absolute;left:1px;top:327px;width:26px;height:1px;background:#d3cfd0"></div>
<div style="position:absolute;left:27px;top:307px;width:1px;height:21px;background:#c6c6c6"></div>
<div class="t" style="left:-186.6px;width:400px;text-align:center;top:311.00px;font-size:14.5px;color:#017343;font-weight:400;">5</div>
<div style="position:absolute;left:28px;top:307px;width:288px;height:21px;background:#cdb57b"></div>
<div style="position:absolute;left:316px;top:307px;width:100px;height:21px;background:#c6c6c6"></div>
<div style="position:absolute;left:416px;top:307px;width:98px;height:21px;background:#c6c6c6"></div>
<div style="position:absolute;left:514px;top:307px;width:108px;height:21px;background:#c6c6c6"></div>
<div style="position:absolute;left:622px;top:307px;width:101px;height:21px;background:#c6c6c6"></div>
<div style="position:absolute;left:723px;top:307px;width:80px;height:21px;background:#c6c6c6"></div>
<div style="position:absolute;left:803px;top:307px;width:72px;height:21px;background:#c6c6c6"></div>
<div style="position:absolute;left:875px;top:307px;width:72px;height:21px;background:#c6c6c6"></div>
<div style="position:absolute;left:947px;top:307px;width:13px;height:21px;background:#c6c6c6"></div>
<div style="position:absolute;left:803px;top:327px;width:157px;height:1px;background:#a6a6a6"></div>
<div style="position:absolute;left:874px;top:307px;width:1px;height:21px;background:#a6a6a6"></div>
<div style="position:absolute;left:946px;top:307px;width:1px;height:21px;background:#a6a6a6"></div>
<div style="position:absolute;left:959px;top:307px;width:1px;height:21px;background:#a6a6a6"></div>
<div style="position:absolute;left:28px;top:327px;width:775px;height:1px;background:#000"></div>
<div style="position:absolute;left:315px;top:307px;width:1px;height:21px;background:#000"></div>
<div style="position:absolute;left:415px;top:307px;width:1px;height:21px;background:#000"></div>
<div style="position:absolute;left:513px;top:307px;width:1px;height:21px;background:#000"></div>
<div style="position:absolute;left:621px;top:307px;width:1px;height:21px;background:#000"></div>
<div style="position:absolute;left:722px;top:307px;width:1px;height:21px;background:#000"></div>
<div style="position:absolute;left:802px;top:307px;width:1px;height:21px;background:#000"></div>
<div class="t" style="left:29.88px;top:310.00px;font-size:15px;font-weight:400;color:#000;transform:scaleX(0.9890);transform-origin:0 0">Кроссовки беговые, размер 38</div>
<div class="t" style="left:336.00px;top:310.00px;font-size:15px;font-weight:400;color:#000;transform:scaleX(1.0480);transform-origin:0 0">женский</div>
<div class="t" style="left:452.15px;top:310.00px;font-size:15px;font-weight:400;color:#000;transform:scaleX(1.0900);transform-origin:0 0">бег</div>
<div class="t" style="left:594.80px;top:310.00px;font-size:15px;font-weight:400;color:#000;transform:scaleX(0.9630);transform-origin:0 0">421</div>
<div class="t" style="left:683.72px;top:310.00px;font-size:15px;font-weight:400;color:#000;transform:scaleX(0.9630);transform-origin:0 0">6 490</div>
<div class="t" style="left:735.80px;top:310.00px;font-size:15px;font-weight:400;color:#000;transform:scaleX(0.9630);transform-origin:0 0">2 732 290</div>
<div style="position:absolute;left:1px;top:328px;width:26px;height:21px;background:#c9efdf"></div>
<div style="position:absolute;left:1px;top:348px;width:26px;height:1px;background:#d3cfd0"></div>
<div style="position:absolute;left:27px;top:328px;width:1px;height:21px;background:#c6c6c6"></div>
<div class="t" style="left:-186.6px;width:400px;text-align:center;top:332.00px;font-size:14.5px;color:#017343;font-weight:400;">6</div>
<div style="position:absolute;left:28px;top:328px;width:288px;height:21px;background:#cdb57b"></div>
<div style="position:absolute;left:316px;top:328px;width:100px;height:21px;background:#c6c6c6"></div>
<div style="position:absolute;left:416px;top:328px;width:98px;height:21px;background:#c6c6c6"></div>
<div style="position:absolute;left:514px;top:328px;width:108px;height:21px;background:#c6c6c6"></div>
<div style="position:absolute;left:622px;top:328px;width:101px;height:21px;background:#c6c6c6"></div>
<div style="position:absolute;left:723px;top:328px;width:80px;height:21px;background:#c6c6c6"></div>
<div style="position:absolute;left:803px;top:328px;width:72px;height:21px;background:#c6c6c6"></div>
<div style="position:absolute;left:875px;top:328px;width:72px;height:21px;background:#c6c6c6"></div>
<div style="position:absolute;left:947px;top:328px;width:13px;height:21px;background:#c6c6c6"></div>
<div style="position:absolute;left:803px;top:348px;width:157px;height:1px;background:#a6a6a6"></div>
<div style="position:absolute;left:874px;top:328px;width:1px;height:21px;background:#a6a6a6"></div>
<div style="position:absolute;left:946px;top:328px;width:1px;height:21px;background:#a6a6a6"></div>
<div style="position:absolute;left:959px;top:328px;width:1px;height:21px;background:#a6a6a6"></div>
<div style="position:absolute;left:28px;top:348px;width:775px;height:1px;background:#000"></div>
<div style="position:absolute;left:315px;top:328px;width:1px;height:21px;background:#000"></div>
<div style="position:absolute;left:415px;top:328px;width:1px;height:21px;background:#000"></div>
<div style="position:absolute;left:513px;top:328px;width:1px;height:21px;background:#000"></div>
<div style="position:absolute;left:621px;top:328px;width:1px;height:21px;background:#000"></div>
<div style="position:absolute;left:722px;top:328px;width:1px;height:21px;background:#000"></div>
<div style="position:absolute;left:802px;top:328px;width:1px;height:21px;background:#000"></div>
<div class="t" style="left:29.88px;top:331.00px;font-size:15px;font-weight:400;color:#000;transform:scaleX(0.9890);transform-origin:0 0">Кроссовки беговые, размер 38</div>
<div class="t" style="left:335.48px;top:331.00px;font-size:15px;font-weight:400;color:#000;transform:scaleX(1.0274);transform-origin:0 0">мужской</div>
<div class="t" style="left:452.15px;top:331.00px;font-size:15px;font-weight:400;color:#000;transform:scaleX(1.0900);transform-origin:0 0">бег</div>
<div class="t" style="left:594.66px;top:331.00px;font-size:15px;font-weight:400;color:#000;transform:scaleX(0.9630);transform-origin:0 0">220</div>
<div class="t" style="left:683.72px;top:331.00px;font-size:15px;font-weight:400;color:#000;transform:scaleX(0.9630);transform-origin:0 0">6 990</div>
<div class="t" style="left:735.80px;top:331.00px;font-size:15px;font-weight:400;color:#000;transform:scaleX(0.9630);transform-origin:0 0">1 537 800</div>
<div style="position:absolute;left:1px;top:349px;width:26px;height:21px;background:#c9efdf"></div>
<div style="position:absolute;left:1px;top:369px;width:26px;height:1px;background:#d3cfd0"></div>
<div style="position:absolute;left:27px;top:349px;width:1px;height:21px;background:#c6c6c6"></div>
<div class="t" style="left:-186.6px;width:400px;text-align:center;top:353.00px;font-size:14.5px;color:#017343;font-weight:400;">7</div>
<div style="position:absolute;left:28px;top:349px;width:288px;height:21px;background:#cdb57b"></div>
<div style="position:absolute;left:316px;top:349px;width:100px;height:21px;background:#c6c6c6"></div>
<div style="position:absolute;left:416px;top:349px;width:98px;height:21px;background:#c6c6c6"></div>
<div style="position:absolute;left:514px;top:349px;width:108px;height:21px;background:#c6c6c6"></div>
<div style="position:absolute;left:622px;top:349px;width:101px;height:21px;background:#c6c6c6"></div>
<div style="position:absolute;left:723px;top:349px;width:80px;height:21px;background:#c6c6c6"></div>
<div style="position:absolute;left:803px;top:349px;width:72px;height:21px;background:#c6c6c6"></div>
<div style="position:absolute;left:875px;top:349px;width:72px;height:21px;background:#c6c6c6"></div>
<div style="position:absolute;left:947px;top:349px;width:13px;height:21px;background:#c6c6c6"></div>
<div style="position:absolute;left:803px;top:369px;width:157px;height:1px;background:#a6a6a6"></div>
<div style="position:absolute;left:874px;top:349px;width:1px;height:21px;background:#a6a6a6"></div>
<div style="position:absolute;left:946px;top:349px;width:1px;height:21px;background:#a6a6a6"></div>
<div style="position:absolute;left:959px;top:349px;width:1px;height:21px;background:#a6a6a6"></div>
<div style="position:absolute;left:28px;top:369px;width:775px;height:1px;background:#000"></div>
<div style="position:absolute;left:315px;top:349px;width:1px;height:21px;background:#000"></div>
<div style="position:absolute;left:415px;top:349px;width:1px;height:21px;background:#000"></div>
<div style="position:absolute;left:513px;top:349px;width:1px;height:21px;background:#000"></div>
<div style="position:absolute;left:621px;top:349px;width:1px;height:21px;background:#000"></div>
<div style="position:absolute;left:722px;top:349px;width:1px;height:21px;background:#000"></div>
<div style="position:absolute;left:802px;top:349px;width:1px;height:21px;background:#000"></div>
<div class="t" style="left:29.88px;top:352.00px;font-size:15px;font-weight:400;color:#000;transform:scaleX(0.9890);transform-origin:0 0">Кроссовки беговые, размер 39</div>
<div class="t" style="left:335.48px;top:352.00px;font-size:15px;font-weight:400;color:#000;transform:scaleX(1.0274);transform-origin:0 0">мужской</div>
<div class="t" style="left:452.15px;top:352.00px;font-size:15px;font-weight:400;color:#000;transform:scaleX(1.0900);transform-origin:0 0">бег</div>
<div class="t" style="left:594.52px;top:352.00px;font-size:15px;font-weight:400;color:#000;transform:scaleX(0.9630);transform-origin:0 0">444</div>
<div class="t" style="left:683.72px;top:352.00px;font-size:15px;font-weight:400;color:#000;transform:scaleX(0.9630);transform-origin:0 0">6 990</div>
<div class="t" style="left:735.80px;top:352.00px;font-size:15px;font-weight:400;color:#000;transform:scaleX(0.9630);transform-origin:0 0">2 796 000</div>
<div style="position:absolute;left:1px;top:370px;width:26px;height:21px;background:#c9efdf"></div>
<div style="position:absolute;left:1px;top:390px;width:26px;height:1px;background:#d3cfd0"></div>
<div style="position:absolute;left:27px;top:370px;width:1px;height:21px;background:#c6c6c6"></div>
<div class="t" style="left:-186.6px;width:400px;text-align:center;top:374.00px;font-size:14.5px;color:#017343;font-weight:400;">8</div>
<div style="position:absolute;left:28px;top:370px;width:288px;height:21px;background:#cdb57b"></div>
<div style="position:absolute;left:316px;top:370px;width:100px;height:21px;background:#c6c6c6"></div>
<div style="position:absolute;left:416px;top:370px;width:98px;height:21px;background:#c6c6c6"></div>
<div style="position:absolute;left:514px;top:370px;width:108px;height:21px;background:#c6c6c6"></div>
<div style="position:absolute;left:622px;top:370px;width:101px;height:21px;background:#c6c6c6"></div>
<div style="position:absolute;left:723px;top:370px;width:80px;height:21px;background:#c6c6c6"></div>
<div style="position:absolute;left:803px;top:370px;width:72px;height:21px;background:#c6c6c6"></div>
<div style="position:absolute;left:875px;top:370px;width:72px;height:21px;background:#c6c6c6"></div>
<div style="position:absolute;left:947px;top:370px;width:13px;height:21px;background:#c6c6c6"></div>
<div style="position:absolute;left:803px;top:390px;width:157px;height:1px;background:#a6a6a6"></div>
<div style="position:absolute;left:874px;top:370px;width:1px;height:21px;background:#a6a6a6"></div>
<div style="position:absolute;left:946px;top:370px;width:1px;height:21px;background:#a6a6a6"></div>
<div style="position:absolute;left:959px;top:370px;width:1px;height:21px;background:#a6a6a6"></div>
<div style="position:absolute;left:28px;top:390px;width:775px;height:1px;background:#000"></div>
<div style="position:absolute;left:315px;top:370px;width:1px;height:21px;background:#000"></div>
<div style="position:absolute;left:415px;top:370px;width:1px;height:21px;background:#000"></div>
<div style="position:absolute;left:513px;top:370px;width:1px;height:21px;background:#000"></div>
<div style="position:absolute;left:621px;top:370px;width:1px;height:21px;background:#000"></div>
<div style="position:absolute;left:722px;top:370px;width:1px;height:21px;background:#000"></div>
<div style="position:absolute;left:802px;top:370px;width:1px;height:21px;background:#000"></div>
<div class="t" style="left:29.88px;top:373.00px;font-size:15px;font-weight:400;color:#000;transform:scaleX(0.9890);transform-origin:0 0">Кроссовки беговые, размер 39</div>
<div class="t" style="left:336.00px;top:373.00px;font-size:15px;font-weight:400;color:#000;transform:scaleX(1.0480);transform-origin:0 0">женский</div>
<div class="t" style="left:452.15px;top:373.00px;font-size:15px;font-weight:400;color:#000;transform:scaleX(1.0900);transform-origin:0 0">бег</div>
<div class="t" style="left:594.52px;top:373.00px;font-size:15px;font-weight:400;color:#000;transform:scaleX(0.9630);transform-origin:0 0">124</div>
<div class="t" style="left:683.72px;top:373.00px;font-size:15px;font-weight:400;color:#000;transform:scaleX(0.9630);transform-origin:0 0">6 490</div>
<div class="t" style="left:747.85px;top:373.00px;font-size:15px;font-weight:400;color:#000;transform:scaleX(0.9630);transform-origin:0 0">804 760</div>
<div style="position:absolute;left:1px;top:391px;width:26px;height:21px;background:#c9efdf"></div>
<div style="position:absolute;left:1px;top:411px;width:26px;height:1px;background:#d3cfd0"></div>
<div style="position:absolute;left:27px;top:391px;width:1px;height:21px;background:#c6c6c6"></div>
<div class="t" style="left:-186.6px;width:400px;text-align:center;top:395.00px;font-size:14.5px;color:#017343;font-weight:400;">9</div>
<div style="position:absolute;left:28px;top:391px;width:288px;height:21px;background:#cdb57b"></div>
<div style="position:absolute;left:316px;top:391px;width:100px;height:21px;background:#c6c6c6"></div>
<div style="position:absolute;left:416px;top:391px;width:98px;height:21px;background:#c6c6c6"></div>
<div style="position:absolute;left:514px;top:391px;width:108px;height:21px;background:#c6c6c6"></div>
<div style="position:absolute;left:622px;top:391px;width:101px;height:21px;background:#c6c6c6"></div>
<div style="position:absolute;left:723px;top:391px;width:80px;height:21px;background:#c6c6c6"></div>
<div style="position:absolute;left:803px;top:391px;width:72px;height:21px;background:#c6c6c6"></div>
<div style="position:absolute;left:875px;top:391px;width:72px;height:21px;background:#c6c6c6"></div>
<div style="position:absolute;left:947px;top:391px;width:13px;height:21px;background:#c6c6c6"></div>
<div style="position:absolute;left:803px;top:411px;width:157px;height:1px;background:#a6a6a6"></div>
<div style="position:absolute;left:874px;top:391px;width:1px;height:21px;background:#a6a6a6"></div>
<div style="position:absolute;left:946px;top:391px;width:1px;height:21px;background:#a6a6a6"></div>
<div style="position:absolute;left:959px;top:391px;width:1px;height:21px;background:#a6a6a6"></div>
<div style="position:absolute;left:28px;top:411px;width:775px;height:1px;background:#000"></div>
<div style="position:absolute;left:315px;top:391px;width:1px;height:21px;background:#000"></div>
<div style="position:absolute;left:415px;top:391px;width:1px;height:21px;background:#000"></div>
<div style="position:absolute;left:513px;top:391px;width:1px;height:21px;background:#000"></div>
<div style="position:absolute;left:621px;top:391px;width:1px;height:21px;background:#000"></div>
<div style="position:absolute;left:722px;top:391px;width:1px;height:21px;background:#000"></div>
<div style="position:absolute;left:802px;top:391px;width:1px;height:21px;background:#000"></div>
<div class="t" style="left:29.88px;top:394.00px;font-size:15px;font-weight:400;color:#000;transform:scaleX(0.9890);transform-origin:0 0">Кроссовки беговые, размер 40</div>
<div class="t" style="left:336.00px;top:394.00px;font-size:15px;font-weight:400;color:#000;transform:scaleX(1.0480);transform-origin:0 0">женский</div>
<div class="t" style="left:452.15px;top:394.00px;font-size:15px;font-weight:400;color:#000;transform:scaleX(1.0900);transform-origin:0 0">бег</div>
<div class="t" style="left:594.80px;top:394.00px;font-size:15px;font-weight:400;color:#000;transform:scaleX(0.9630);transform-origin:0 0">321</div>
<div class="t" style="left:683.72px;top:394.00px;font-size:15px;font-weight:400;color:#000;transform:scaleX(0.9630);transform-origin:0 0">6 490</div>
<div class="t" style="left:735.80px;top:394.00px;font-size:15px;font-weight:400;color:#000;transform:scaleX(0.9630);transform-origin:0 0">2 083 290</div>
<div style="position:absolute;left:1px;top:412px;width:26px;height:21px;background:#c9efdf"></div>
<div style="position:absolute;left:1px;top:432px;width:26px;height:1px;background:#d3cfd0"></div>
<div style="position:absolute;left:27px;top:412px;width:1px;height:21px;background:#c6c6c6"></div>
<div class="t" style="left:-186.6px;width:400px;text-align:center;top:416.00px;font-size:14.5px;color:#017343;font-weight:400;">10</div>
<div style="position:absolute;left:28px;top:412px;width:288px;height:21px;background:#cdb57b"></div>
<div style="position:absolute;left:316px;top:412px;width:100px;height:21px;background:#c6c6c6"></div>
<div style="position:absolute;left:416px;top:412px;width:98px;height:21px;background:#c6c6c6"></div>
<div style="position:absolute;left:514px;top:412px;width:108px;height:21px;background:#c6c6c6"></div>
<div style="position:absolute;left:622px;top:412px;width:101px;height:21px;background:#c6c6c6"></div>
<div style="position:absolute;left:723px;top:412px;width:80px;height:21px;background:#c6c6c6"></div>
<div style="position:absolute;left:803px;top:412px;width:72px;height:21px;background:#c6c6c6"></div>
<div style="position:absolute;left:875px;top:412px;width:72px;height:21px;background:#c6c6c6"></div>
<div style="position:absolute;left:947px;top:412px;width:13px;height:21px;background:#c6c6c6"></div>
<div style="position:absolute;left:803px;top:432px;width:157px;height:1px;background:#a6a6a6"></div>
<div style="position:absolute;left:874px;top:412px;width:1px;height:21px;background:#a6a6a6"></div>
<div style="position:absolute;left:946px;top:412px;width:1px;height:21px;background:#a6a6a6"></div>
<div style="position:absolute;left:959px;top:412px;width:1px;height:21px;background:#a6a6a6"></div>
<div style="position:absolute;left:28px;top:432px;width:775px;height:1px;background:#000"></div>
<div style="position:absolute;left:315px;top:412px;width:1px;height:21px;background:#000"></div>
<div style="position:absolute;left:415px;top:412px;width:1px;height:21px;background:#000"></div>
<div style="position:absolute;left:513px;top:412px;width:1px;height:21px;background:#000"></div>
<div style="position:absolute;left:621px;top:412px;width:1px;height:21px;background:#000"></div>
<div style="position:absolute;left:722px;top:412px;width:1px;height:21px;background:#000"></div>
<div style="position:absolute;left:802px;top:412px;width:1px;height:21px;background:#000"></div>
<div class="t" style="left:29.88px;top:415.00px;font-size:15px;font-weight:400;color:#000;transform:scaleX(0.9890);transform-origin:0 0">Кроссовки беговые, размер 40</div>
<div class="t" style="left:335.48px;top:415.00px;font-size:15px;font-weight:400;color:#000;transform:scaleX(1.0274);transform-origin:0 0">мужской</div>
<div class="t" style="left:452.15px;top:415.00px;font-size:15px;font-weight:400;color:#000;transform:scaleX(1.0900);transform-origin:0 0">бег</div>
<div class="t" style="left:594.66px;top:415.00px;font-size:15px;font-weight:400;color:#000;transform:scaleX(0.9630);transform-origin:0 0">500</div>
<div class="t" style="left:683.72px;top:415.00px;font-size:15px;font-weight:400;color:#000;transform:scaleX(0.9630);transform-origin:0 0">6 990</div>
<div class="t" style="left:735.80px;top:415.00px;font-size:15px;font-weight:400;color:#000;transform:scaleX(0.9630);transform-origin:0 0">3 495 000</div>
<div style="position:absolute;left:1px;top:433px;width:26px;height:21px;background:#c9efdf"></div>
<div style="position:absolute;left:1px;top:453px;width:26px;height:1px;background:#d3cfd0"></div>
<div style="position:absolute;left:27px;top:433px;width:1px;height:21px;background:#c6c6c6"></div>
<div class="t" style="left:-186.6px;width:400px;text-align:center;top:437.00px;font-size:14.5px;color:#017343;font-weight:400;">11</div>
<div style="position:absolute;left:28px;top:433px;width:288px;height:21px;background:#cdb57b"></div>
<div style="position:absolute;left:316px;top:433px;width:100px;height:21px;background:#c6c6c6"></div>
<div style="position:absolute;left:416px;top:433px;width:98px;height:21px;background:#c6c6c6"></div>
<div style="position:absolute;left:514px;top:433px;width:108px;height:21px;background:#c6c6c6"></div>
<div style="position:absolute;left:622px;top:433px;width:101px;height:21px;background:#c6c6c6"></div>
<div style="position:absolute;left:723px;top:433px;width:80px;height:21px;background:#c6c6c6"></div>
<div style="position:absolute;left:803px;top:433px;width:72px;height:21px;background:#c6c6c6"></div>
<div style="position:absolute;left:875px;top:433px;width:72px;height:21px;background:#c6c6c6"></div>
<div style="position:absolute;left:947px;top:433px;width:13px;height:21px;background:#c6c6c6"></div>
<div style="position:absolute;left:803px;top:453px;width:157px;height:1px;background:#a6a6a6"></div>
<div style="position:absolute;left:874px;top:433px;width:1px;height:21px;background:#a6a6a6"></div>
<div style="position:absolute;left:946px;top:433px;width:1px;height:21px;background:#a6a6a6"></div>
<div style="position:absolute;left:959px;top:433px;width:1px;height:21px;background:#a6a6a6"></div>
<div style="position:absolute;left:28px;top:453px;width:775px;height:1px;background:#000"></div>
<div style="position:absolute;left:315px;top:433px;width:1px;height:21px;background:#000"></div>
<div style="position:absolute;left:415px;top:433px;width:1px;height:21px;background:#000"></div>
<div style="position:absolute;left:513px;top:433px;width:1px;height:21px;background:#000"></div>
<div style="position:absolute;left:621px;top:433px;width:1px;height:21px;background:#000"></div>
<div style="position:absolute;left:722px;top:433px;width:1px;height:21px;background:#000"></div>
<div style="position:absolute;left:802px;top:433px;width:1px;height:21px;background:#000"></div>
<div class="t" style="left:29.88px;top:436.00px;font-size:15px;font-weight:400;color:#000;transform:scaleX(0.9890);transform-origin:0 0">Кроссовки беговые, размер 40</div>
<div class="t" style="left:335.48px;top:436.00px;font-size:15px;font-weight:400;color:#000;transform:scaleX(1.0274);transform-origin:0 0">мужской</div>
<div class="t" style="left:452.15px;top:436.00px;font-size:15px;font-weight:400;color:#000;transform:scaleX(1.0900);transform-origin:0 0">бег</div>
<div class="t" style="left:594.66px;top:436.00px;font-size:15px;font-weight:400;color:#000;transform:scaleX(0.9630);transform-origin:0 0">500</div>
<div class="t" style="left:683.72px;top:436.00px;font-size:15px;font-weight:400;color:#000;transform:scaleX(0.9630);transform-origin:0 0">6 990</div>
<div class="t" style="left:735.80px;top:436.00px;font-size:15px;font-weight:400;color:#000;transform:scaleX(0.9630);transform-origin:0 0">3 495 000</div>
<div style="position:absolute;left:1px;top:454px;width:26px;height:21px;background:#c9efdf"></div>
<div style="position:absolute;left:1px;top:474px;width:26px;height:1px;background:#d3cfd0"></div>
<div style="position:absolute;left:27px;top:454px;width:1px;height:21px;background:#c6c6c6"></div>
<div class="t" style="left:-186.6px;width:400px;text-align:center;top:458.00px;font-size:14.5px;color:#017343;font-weight:400;">12</div>
<div style="position:absolute;left:28px;top:454px;width:288px;height:21px;background:#cdb57b"></div>
<div style="position:absolute;left:316px;top:454px;width:100px;height:21px;background:#c6c6c6"></div>
<div style="position:absolute;left:416px;top:454px;width:98px;height:21px;background:#c6c6c6"></div>
<div style="position:absolute;left:514px;top:454px;width:108px;height:21px;background:#c6c6c6"></div>
<div style="position:absolute;left:622px;top:454px;width:101px;height:21px;background:#c6c6c6"></div>
<div style="position:absolute;left:723px;top:454px;width:80px;height:21px;background:#c6c6c6"></div>
<div style="position:absolute;left:803px;top:454px;width:72px;height:21px;background:#c6c6c6"></div>
<div style="position:absolute;left:875px;top:454px;width:72px;height:21px;background:#c6c6c6"></div>
<div style="position:absolute;left:947px;top:454px;width:13px;height:21px;background:#c6c6c6"></div>
<div style="position:absolute;left:803px;top:474px;width:157px;height:1px;background:#a6a6a6"></div>
<div style="position:absolute;left:874px;top:454px;width:1px;height:21px;background:#a6a6a6"></div>
<div style="position:absolute;left:946px;top:454px;width:1px;height:21px;background:#a6a6a6"></div>
<div style="position:absolute;left:959px;top:454px;width:1px;height:21px;background:#a6a6a6"></div>
<div style="position:absolute;left:28px;top:474px;width:775px;height:1px;background:#000"></div>
<div style="position:absolute;left:315px;top:454px;width:1px;height:21px;background:#000"></div>
<div style="position:absolute;left:415px;top:454px;width:1px;height:21px;background:#000"></div>
<div style="position:absolute;left:513px;top:454px;width:1px;height:21px;background:#000"></div>
<div style="position:absolute;left:621px;top:454px;width:1px;height:21px;background:#000"></div>
<div style="position:absolute;left:722px;top:454px;width:1px;height:21px;background:#000"></div>
<div style="position:absolute;left:802px;top:454px;width:1px;height:21px;background:#000"></div>
<div class="t" style="left:29.88px;top:457.00px;font-size:15px;font-weight:400;color:#000;transform:scaleX(0.9890);transform-origin:0 0">Кроссовки беговые, размер 41</div>
<div class="t" style="left:335.48px;top:457.00px;font-size:15px;font-weight:400;color:#000;transform:scaleX(1.0274);transform-origin:0 0">мужской</div>
<div class="t" style="left:452.15px;top:457.00px;font-size:15px;font-weight:400;color:#000;transform:scaleX(1.0900);transform-origin:0 0">бег</div>
<div class="t" style="left:594.52px;top:457.00px;font-size:15px;font-weight:400;color:#000;transform:scaleX(0.9630);transform-origin:0 0">664</div>
<div class="t" style="left:683.72px;top:457.00px;font-size:15px;font-weight:400;color:#000;transform:scaleX(0.9630);transform-origin:0 0">6 990</div>
<div class="t" style="left:735.80px;top:457.00px;font-size:15px;font-weight:400;color:#000;transform:scaleX(0.9630);transform-origin:0 0">4 641 360</div>
<div style="position:absolute;left:1px;top:475px;width:26px;height:21px;background:#c9efdf"></div>
<div style="position:absolute;left:1px;top:495px;width:26px;height:1px;background:#d3cfd0"></div>
<div style="position:absolute;left:27px;top:475px;width:1px;height:21px;background:#c6c6c6"></div>
<div class="t" style="left:-186.6px;width:400px;text-align:center;top:479.00px;font-size:14.5px;color:#017343;font-weight:400;">13</div>
<div style="position:absolute;left:28px;top:475px;width:288px;height:21px;background:#cdb57b"></div>
<div style="position:absolute;left:316px;top:475px;width:100px;height:21px;background:#c6c6c6"></div>
<div style="position:absolute;left:416px;top:475px;width:98px;height:21px;background:#c6c6c6"></div>
<div style="position:absolute;left:514px;top:475px;width:108px;height:21px;background:#c6c6c6"></div>
<div style="position:absolute;left:622px;top:475px;width:101px;height:21px;background:#c6c6c6"></div>
<div style="position:absolute;left:723px;top:475px;width:80px;height:21px;background:#c6c6c6"></div>
<div style="position:absolute;left:803px;top:475px;width:72px;height:21px;background:#c6c6c6"></div>
<div style="position:absolute;left:875px;top:475px;width:72px;height:21px;background:#c6c6c6"></div>
<div style="position:absolute;left:947px;top:475px;width:13px;height:21px;background:#c6c6c6"></div>
<div style="position:absolute;left:803px;top:495px;width:157px;height:1px;background:#a6a6a6"></div>
<div style="position:absolute;left:874px;top:475px;width:1px;height:21px;background:#a6a6a6"></div>
<div style="position:absolute;left:946px;top:475px;width:1px;height:21px;background:#a6a6a6"></div>
<div style="position:absolute;left:959px;top:475px;width:1px;height:21px;background:#a6a6a6"></div>
<div style="position:absolute;left:28px;top:495px;width:775px;height:1px;background:#000"></div>
<div style="position:absolute;left:315px;top:475px;width:1px;height:21px;background:#000"></div>
<div style="position:absolute;left:415px;top:475px;width:1px;height:21px;background:#000"></div>
<div style="position:absolute;left:513px;top:475px;width:1px;height:21px;background:#000"></div>
<div style="position:absolute;left:621px;top:475px;width:1px;height:21px;background:#000"></div>
<div style="position:absolute;left:722px;top:475px;width:1px;height:21px;background:#000"></div>
<div style="position:absolute;left:802px;top:475px;width:1px;height:21px;background:#000"></div>
<div class="t" style="left:29.88px;top:478.00px;font-size:15px;font-weight:400;color:#000;transform:scaleX(0.9890);transform-origin:0 0">Кроссовки беговые, размер 42</div>
<div class="t" style="left:335.48px;top:478.00px;font-size:15px;font-weight:400;color:#000;transform:scaleX(1.0274);transform-origin:0 0">мужской</div>
<div class="t" style="left:452.15px;top:478.00px;font-size:15px;font-weight:400;color:#000;transform:scaleX(1.0900);transform-origin:0 0">бег</div>
<div class="t" style="left:594.52px;top:478.00px;font-size:15px;font-weight:400;color:#000;transform:scaleX(0.9630);transform-origin:0 0">334</div>
<div class="t" style="left:683.72px;top:478.00px;font-size:15px;font-weight:400;color:#000;transform:scaleX(0.9630);transform-origin:0 0">6 990</div>
<div class="t" style="left:735.80px;top:478.00px;font-size:15px;font-weight:400;color:#000;transform:scaleX(0.9630);transform-origin:0 0">2 334 660</div>
<div style="position:absolute;left:1px;top:496px;width:26px;height:21px;background:#c9efdf"></div>
<div style="position:absolute;left:1px;top:516px;width:26px;height:1px;background:#d3cfd0"></div>
<div style="position:absolute;left:27px;top:496px;width:1px;height:21px;background:#c6c6c6"></div>
<div class="t" style="left:-186.6px;width:400px;text-align:center;top:500.00px;font-size:14.5px;color:#017343;font-weight:400;">14</div>
<div style="position:absolute;left:28px;top:496px;width:288px;height:21px;background:#cdb57b"></div>
<div style="position:absolute;left:316px;top:496px;width:100px;height:21px;background:#c6c6c6"></div>
<div style="position:absolute;left:416px;top:496px;width:98px;height:21px;background:#c6c6c6"></div>
<div style="position:absolute;left:514px;top:496px;width:108px;height:21px;background:#c6c6c6"></div>
<div style="position:absolute;left:622px;top:496px;width:101px;height:21px;background:#c6c6c6"></div>
<div style="position:absolute;left:723px;top:496px;width:80px;height:21px;background:#c6c6c6"></div>
<div style="position:absolute;left:803px;top:496px;width:72px;height:21px;background:#c6c6c6"></div>
<div style="position:absolute;left:875px;top:496px;width:72px;height:21px;background:#c6c6c6"></div>
<div style="position:absolute;left:947px;top:496px;width:13px;height:21px;background:#c6c6c6"></div>
<div style="position:absolute;left:803px;top:516px;width:157px;height:1px;background:#a6a6a6"></div>
<div style="position:absolute;left:874px;top:496px;width:1px;height:21px;background:#a6a6a6"></div>
<div style="position:absolute;left:946px;top:496px;width:1px;height:21px;background:#a6a6a6"></div>
<div style="position:absolute;left:959px;top:496px;width:1px;height:21px;background:#a6a6a6"></div>
<div style="position:absolute;left:28px;top:516px;width:775px;height:1px;background:#000"></div>
<div style="position:absolute;left:315px;top:496px;width:1px;height:21px;background:#000"></div>
<div style="position:absolute;left:415px;top:496px;width:1px;height:21px;background:#000"></div>
<div style="position:absolute;left:513px;top:496px;width:1px;height:21px;background:#000"></div>
<div style="position:absolute;left:621px;top:496px;width:1px;height:21px;background:#000"></div>
<div style="position:absolute;left:722px;top:496px;width:1px;height:21px;background:#000"></div>
<div style="position:absolute;left:802px;top:496px;width:1px;height:21px;background:#000"></div>
<div class="t" style="left:29.88px;top:499.00px;font-size:15px;font-weight:400;color:#000;transform:scaleX(0.9890);transform-origin:0 0">Кроссовки беговые, размер 43</div>
<div class="t" style="left:335.48px;top:499.00px;font-size:15px;font-weight:400;color:#000;transform:scaleX(1.0274);transform-origin:0 0">мужской</div>
<div class="t" style="left:452.15px;top:499.00px;font-size:15px;font-weight:400;color:#000;transform:scaleX(1.0900);transform-origin:0 0">бег</div>
<div class="t" style="left:594.83px;top:499.00px;font-size:15px;font-weight:400;color:#000;transform:scaleX(0.9630);transform-origin:0 0">212</div>
<div class="t" style="left:683.72px;top:499.00px;font-size:15px;font-weight:400;color:#000;transform:scaleX(0.9630);transform-origin:0 0">6 990</div>
<div class="t" style="left:735.80px;top:499.00px;font-size:15px;font-weight:400;color:#000;transform:scaleX(0.9630);transform-origin:0 0">1 481 880</div>
<div style="position:absolute;left:1px;top:517px;width:26px;height:21px;background:#c9efdf"></div>
<div style="position:absolute;left:1px;top:537px;width:26px;height:1px;background:#d3cfd0"></div>
<div style="position:absolute;left:27px;top:517px;width:1px;height:21px;background:#c6c6c6"></div>
<div class="t" style="left:-186.6px;width:400px;text-align:center;top:521.00px;font-size:14.5px;color:#017343;font-weight:400;">15</div>
<div style="position:absolute;left:28px;top:517px;width:288px;height:21px;background:#cdb57b"></div>
<div style="position:absolute;left:316px;top:517px;width:100px;height:21px;background:#c6c6c6"></div>
<div style="position:absolute;left:416px;top:517px;width:98px;height:21px;background:#c6c6c6"></div>
<div style="position:absolute;left:514px;top:517px;width:108px;height:21px;background:#c6c6c6"></div>
<div style="position:absolute;left:622px;top:517px;width:101px;height:21px;background:#c6c6c6"></div>
<div style="position:absolute;left:723px;top:517px;width:80px;height:21px;background:#c6c6c6"></div>
<div style="position:absolute;left:803px;top:517px;width:72px;height:21px;background:#c6c6c6"></div>
<div style="position:absolute;left:875px;top:517px;width:72px;height:21px;background:#c6c6c6"></div>
<div style="position:absolute;left:947px;top:517px;width:13px;height:21px;background:#c6c6c6"></div>
<div style="position:absolute;left:803px;top:537px;width:157px;height:1px;background:#a6a6a6"></div>
<div style="position:absolute;left:874px;top:517px;width:1px;height:21px;background:#a6a6a6"></div>
<div style="position:absolute;left:946px;top:517px;width:1px;height:21px;background:#a6a6a6"></div>
<div style="position:absolute;left:959px;top:517px;width:1px;height:21px;background:#a6a6a6"></div>
<div style="position:absolute;left:28px;top:537px;width:775px;height:1px;background:#000"></div>
<div style="position:absolute;left:315px;top:517px;width:1px;height:21px;background:#000"></div>
<div style="position:absolute;left:415px;top:517px;width:1px;height:21px;background:#000"></div>
<div style="position:absolute;left:513px;top:517px;width:1px;height:21px;background:#000"></div>
<div style="position:absolute;left:621px;top:517px;width:1px;height:21px;background:#000"></div>
<div style="position:absolute;left:722px;top:517px;width:1px;height:21px;background:#000"></div>
<div style="position:absolute;left:802px;top:517px;width:1px;height:21px;background:#000"></div>
<div class="t" style="left:29.88px;top:520.00px;font-size:15px;font-weight:400;color:#000;transform:scaleX(0.9890);transform-origin:0 0">Кроссовки беговые, размер 44</div>
<div class="t" style="left:335.48px;top:520.00px;font-size:15px;font-weight:400;color:#000;transform:scaleX(1.0274);transform-origin:0 0">мужской</div>
<div class="t" style="left:452.15px;top:520.00px;font-size:15px;font-weight:400;color:#000;transform:scaleX(1.0900);transform-origin:0 0">бег</div>
<div class="t" style="left:594.83px;top:520.00px;font-size:15px;font-weight:400;color:#000;transform:scaleX(0.9630);transform-origin:0 0">222</div>
<div class="t" style="left:683.72px;top:520.00px;font-size:15px;font-weight:400;color:#000;transform:scaleX(0.9630);transform-origin:0 0">6 990</div>
<div class="t" style="left:735.80px;top:520.00px;font-size:15px;font-weight:400;color:#000;transform:scaleX(0.9630);transform-origin:0 0">1 551 780</div>
<div style="position:absolute;left:1px;top:538px;width:26px;height:21px;background:#c9efdf"></div>
<div style="position:absolute;left:1px;top:558px;width:26px;height:1px;background:#d3cfd0"></div>
<div style="position:absolute;left:27px;top:538px;width:1px;height:21px;background:#c6c6c6"></div>
<div class="t" style="left:-186.6px;width:400px;text-align:center;top:542.00px;font-size:14.5px;color:#017343;font-weight:400;">16</div>
<div style="position:absolute;left:28px;top:538px;width:288px;height:21px;background:#cdb57b"></div>
<div style="position:absolute;left:316px;top:538px;width:100px;height:21px;background:#c6c6c6"></div>
<div style="position:absolute;left:416px;top:538px;width:98px;height:21px;background:#c6c6c6"></div>
<div style="position:absolute;left:514px;top:538px;width:108px;height:21px;background:#c6c6c6"></div>
<div style="position:absolute;left:622px;top:538px;width:101px;height:21px;background:#c6c6c6"></div>
<div style="position:absolute;left:723px;top:538px;width:80px;height:21px;background:#c6c6c6"></div>
<div style="position:absolute;left:803px;top:538px;width:72px;height:21px;background:#c6c6c6"></div>
<div style="position:absolute;left:875px;top:538px;width:72px;height:21px;background:#c6c6c6"></div>
<div style="position:absolute;left:947px;top:538px;width:13px;height:21px;background:#c6c6c6"></div>
<div style="position:absolute;left:803px;top:558px;width:157px;height:1px;background:#a6a6a6"></div>
<div style="position:absolute;left:874px;top:538px;width:1px;height:21px;background:#a6a6a6"></div>
<div style="position:absolute;left:946px;top:538px;width:1px;height:21px;background:#a6a6a6"></div>
<div style="position:absolute;left:959px;top:538px;width:1px;height:21px;background:#a6a6a6"></div>
<div style="position:absolute;left:28px;top:558px;width:775px;height:1px;background:#000"></div>
<div style="position:absolute;left:315px;top:538px;width:1px;height:21px;background:#000"></div>
<div style="position:absolute;left:415px;top:538px;width:1px;height:21px;background:#000"></div>
<div style="position:absolute;left:513px;top:538px;width:1px;height:21px;background:#000"></div>
<div style="position:absolute;left:621px;top:538px;width:1px;height:21px;background:#000"></div>
<div style="position:absolute;left:722px;top:538px;width:1px;height:21px;background:#000"></div>
<div style="position:absolute;left:802px;top:538px;width:1px;height:21px;background:#000"></div>
<div class="t" style="left:29.88px;top:541.00px;font-size:15px;font-weight:400;color:#000;transform:scaleX(0.9890);transform-origin:0 0">Кроссовки беговые, размер 45</div>
<div class="t" style="left:335.48px;top:541.00px;font-size:15px;font-weight:400;color:#000;transform:scaleX(1.0274);transform-origin:0 0">мужской</div>
<div class="t" style="left:452.15px;top:541.00px;font-size:15px;font-weight:400;color:#000;transform:scaleX(1.0900);transform-origin:0 0">бег</div>
<div class="t" style="left:594.80px;top:541.00px;font-size:15px;font-weight:400;color:#000;transform:scaleX(0.9630);transform-origin:0 0">221</div>
<div class="t" style="left:683.72px;top:541.00px;font-size:15px;font-weight:400;color:#000;transform:scaleX(0.9630);transform-origin:0 0">6 990</div>
<div class="t" style="left:735.80px;top:541.00px;font-size:15px;font-weight:400;color:#000;transform:scaleX(0.9630);transform-origin:0 0">1 544 790</div>
<div style="position:absolute;left:1px;top:559px;width:26px;height:21px;background:#e6e6e6"></div>
<div style="position:absolute;left:1px;top:579px;width:26px;height:1px;background:#c6c6c6"></div>
<div style="position:absolute;left:27px;top:559px;width:1px;height:21px;background:#c6c6c6"></div>
<div class="t" style="left:-186.6px;width:400px;text-align:center;top:563.00px;font-size:14.5px;color:#262626;font-weight:400;">17</div>
<div style="position:absolute;left:28px;top:559px;width:288px;height:21px;background:#ffe699"></div>
<div style="position:absolute;left:316px;top:559px;width:100px;height:21px;background:#fff"></div>
<div style="position:absolute;left:416px;top:559px;width:98px;height:21px;background:#fff"></div>
<div style="position:absolute;left:514px;top:559px;width:108px;height:21px;background:#fff"></div>
<div style="position:absolute;left:622px;top:559px;width:101px;height:21px;background:#fff"></div>
<div style="position:absolute;left:723px;top:559px;width:80px;height:21px;background:#fff"></div>
<div style="position:absolute;left:803px;top:559px;width:72px;height:21px;background:#fff"></div>
<div style="position:absolute;left:875px;top:559px;width:72px;height:21px;background:#fff"></div>
<div style="position:absolute;left:947px;top:559px;width:13px;height:21px;background:#fff"></div>
<div style="position:absolute;left:803px;top:579px;width:157px;height:1px;background:#d9d9d9"></div>
<div style="position:absolute;left:874px;top:559px;width:1px;height:21px;background:#d9d9d9"></div>
<div style="position:absolute;left:946px;top:559px;width:1px;height:21px;background:#d9d9d9"></div>
<div style="position:absolute;left:959px;top:559px;width:1px;height:21px;background:#d9d9d9"></div>
<div style="position:absolute;left:28px;top:579px;width:775px;height:1px;background:#000"></div>
<div style="position:absolute;left:315px;top:559px;width:1px;height:21px;background:#000"></div>
<div style="position:absolute;left:415px;top:559px;width:1px;height:21px;background:#000"></div>
<div style="position:absolute;left:513px;top:559px;width:1px;height:21px;background:#000"></div>
<div style="position:absolute;left:621px;top:559px;width:1px;height:21px;background:#000"></div>
<div style="position:absolute;left:722px;top:559px;width:1px;height:21px;background:#000"></div>
<div style="position:absolute;left:802px;top:559px;width:1px;height:21px;background:#000"></div>
<div class="t" style="left:29.90px;top:562.00px;font-size:15px;font-weight:400;color:#000;transform:scaleX(0.9780);transform-origin:0 0">Кроссовки для баскетбола, размер 36</div>
<div class="t" style="left:336.00px;top:562.00px;font-size:15px;font-weight:400;color:#000;transform:scaleX(1.0480);transform-origin:0 0">женский</div>
<div class="t" style="left:429.59px;top:562.00px;font-size:15px;font-weight:400;color:#000;transform:scaleX(0.9760);transform-origin:0 0">баскетбол</div>
<div class="t" style="left:594.83px;top:562.00px;font-size:15px;font-weight:400;color:#000;transform:scaleX(0.9630);transform-origin:0 0">187</div>
<div class="t" style="left:683.72px;top:562.00px;font-size:15px;font-weight:400;color:#000;transform:scaleX(0.9630);transform-origin:0 0">5 990</div>
<div class="t" style="left:735.80px;top:562.00px;font-size:15px;font-weight:400;color:#000;transform:scaleX(0.9630);transform-origin:0 0">1 120 130</div>
<div style="position:absolute;left:1px;top:580px;width:26px;height:21px;background:#e6e6e6"></div>
<div style="position:absolute;left:1px;top:600px;width:26px;height:1px;background:#c6c6c6"></div>
<div style="position:absolute;left:27px;top:580px;width:1px;height:21px;background:#c6c6c6"></div>
<div class="t" style="left:-186.6px;width:400px;text-align:center;top:584.00px;font-size:14.5px;color:#262626;font-weight:400;">18</div>
<div style="position:absolute;left:28px;top:580px;width:288px;height:21px;background:#ffe699"></div>
<div style="position:absolute;left:316px;top:580px;width:100px;height:21px;background:#fff"></div>
<div style="position:absolute;left:416px;top:580px;width:98px;height:21px;background:#fff"></div>
<div style="position:absolute;left:514px;top:580px;width:108px;height:21px;background:#fff"></div>
<div style="position:absolute;left:622px;top:580px;width:101px;height:21px;background:#fff"></div>
<div style="position:absolute;left:723px;top:580px;width:80px;height:21px;background:#fff"></div>
<div style="position:absolute;left:803px;top:580px;width:72px;height:21px;background:#fff"></div>
<div style="position:absolute;left:875px;top:580px;width:72px;height:21px;background:#fff"></div>
<div style="position:absolute;left:947px;top:580px;width:13px;height:21px;background:#fff"></div>
<div style="position:absolute;left:803px;top:600px;width:157px;height:1px;background:#d9d9d9"></div>
<div style="position:absolute;left:874px;top:580px;width:1px;height:21px;background:#d9d9d9"></div>
<div style="position:absolute;left:946px;top:580px;width:1px;height:21px;background:#d9d9d9"></div>
<div style="position:absolute;left:959px;top:580px;width:1px;height:21px;background:#d9d9d9"></div>
<div style="position:absolute;left:28px;top:600px;width:775px;height:1px;background:#000"></div>
<div style="position:absolute;left:315px;top:580px;width:1px;height:21px;background:#000"></div>
<div style="position:absolute;left:415px;top:580px;width:1px;height:21px;background:#000"></div>
<div style="position:absolute;left:513px;top:580px;width:1px;height:21px;background:#000"></div>
<div style="position:absolute;left:621px;top:580px;width:1px;height:21px;background:#000"></div>
<div style="position:absolute;left:722px;top:580px;width:1px;height:21px;background:#000"></div>
<div style="position:absolute;left:802px;top:580px;width:1px;height:21px;background:#000"></div>
<div class="t" style="left:29.90px;top:583.00px;font-size:15px;font-weight:400;color:#000;transform:scaleX(0.9780);transform-origin:0 0">Кроссовки для баскетбола, размер 37</div>
<div class="t" style="left:336.00px;top:583.00px;font-size:15px;font-weight:400;color:#000;transform:scaleX(1.0480);transform-origin:0 0">женский</div>
<div class="t" style="left:429.59px;top:583.00px;font-size:15px;font-weight:400;color:#000;transform:scaleX(0.9760);transform-origin:0 0">баскетбол</div>
<div class="t" style="left:594.71px;top:583.00px;font-size:15px;font-weight:400;color:#000;transform:scaleX(0.9630);transform-origin:0 0">275</div>
<div class="t" style="left:683.72px;top:583.00px;font-size:15px;font-weight:400;color:#000;transform:scaleX(0.9630);transform-origin:0 0">5 990</div>
<div class="t" style="left:735.80px;top:583.00px;font-size:15px;font-weight:400;color:#000;transform:scaleX(0.9630);transform-origin:0 0">1 647 250</div>
<div style="position:absolute;left:1px;top:601px;width:26px;height:21px;background:#e6e6e6"></div>
<div style="position:absolute;left:1px;top:621px;width:26px;height:1px;background:#c6c6c6"></div>
<div style="position:absolute;left:27px;top:601px;width:1px;height:21px;background:#c6c6c6"></div>
<div class="t" style="left:-186.6px;width:400px;text-align:center;top:605.00px;font-size:14.5px;color:#262626;font-weight:400;">19</div>
<div style="position:absolute;left:28px;top:601px;width:288px;height:21px;background:#ffe699"></div>
<div style="position:absolute;left:316px;top:601px;width:100px;height:21px;background:#fff"></div>
<div style="position:absolute;left:416px;top:601px;width:98px;height:21px;background:#fff"></div>
<div style="position:absolute;left:514px;top:601px;width:108px;height:21px;background:#fff"></div>
<div style="position:absolute;left:622px;top:601px;width:101px;height:21px;background:#fff"></div>
<div style="position:absolute;left:723px;top:601px;width:80px;height:21px;background:#fff"></div>
<div style="position:absolute;left:803px;top:601px;width:72px;height:21px;background:#fff"></div>
<div style="position:absolute;left:875px;top:601px;width:72px;height:21px;background:#fff"></div>
<div style="position:absolute;left:947px;top:601px;width:13px;height:21px;background:#fff"></div>
<div style="position:absolute;left:803px;top:621px;width:157px;height:1px;background:#d9d9d9"></div>
<div style="position:absolute;left:874px;top:601px;width:1px;height:21px;background:#d9d9d9"></div>
<div style="position:absolute;left:946px;top:601px;width:1px;height:21px;background:#d9d9d9"></div>
<div style="position:absolute;left:959px;top:601px;width:1px;height:21px;background:#d9d9d9"></div>
<div style="position:absolute;left:28px;top:621px;width:775px;height:1px;background:#000"></div>
<div style="position:absolute;left:315px;top:601px;width:1px;height:21px;background:#000"></div>
<div style="position:absolute;left:415px;top:601px;width:1px;height:21px;background:#000"></div>
<div style="position:absolute;left:513px;top:601px;width:1px;height:21px;background:#000"></div>
<div style="position:absolute;left:621px;top:601px;width:1px;height:21px;background:#000"></div>
<div style="position:absolute;left:722px;top:601px;width:1px;height:21px;background:#000"></div>
<div style="position:absolute;left:802px;top:601px;width:1px;height:21px;background:#000"></div>
<div class="t" style="left:29.90px;top:604.00px;font-size:15px;font-weight:400;color:#000;transform:scaleX(0.9780);transform-origin:0 0">Кроссовки для баскетбола, размер 38</div>
<div class="t" style="left:336.00px;top:604.00px;font-size:15px;font-weight:400;color:#000;transform:scaleX(1.0480);transform-origin:0 0">женский</div>
<div class="t" style="left:429.59px;top:604.00px;font-size:15px;font-weight:400;color:#000;transform:scaleX(0.9760);transform-origin:0 0">баскетбол</div>
<div class="t" style="left:594.71px;top:604.00px;font-size:15px;font-weight:400;color:#000;transform:scaleX(0.9630);transform-origin:0 0">245</div>
<div class="t" style="left:683.72px;top:604.00px;font-size:15px;font-weight:400;color:#000;transform:scaleX(0.9630);transform-origin:0 0">5 990</div>
<div class="t" style="left:735.80px;top:604.00px;font-size:15px;font-weight:400;color:#000;transform:scaleX(0.9630);transform-origin:0 0">1 467 550</div>
<div style="position:absolute;left:26px;top:265px;width:2px;height:293px;background:#0f6b3a"></div>
<div style="position:absolute;left:28px;top:265px;width:1px;height:291px;background:#fff"></div>
<div style="position:absolute;left:26px;top:556px;width:6px;height:2px;background:#0f6b3a"></div>
<div style="position:absolute;left:29px;top:552px;width:3px;height:4px;background:#fff"></div>
<div style="position:absolute;left:28px;top:555px;width:4px;height:1px;background:#fff"></div>
<div style="position:absolute;left:28px;top:263px;width:932px;height:1px;background:#0f6b3a"></div>
<div style="position:absolute;left:959px;top:202px;width:1px;height:419px;background:#a6a6a6"></div>
<div style="position:absolute;left:960px;top:202px;width:19px;height:419px;background:#e8e8e8"></div>
<div style="position:absolute;left:963px;top:244px;width:15px;height:377px;background:#dadada"></div>
<div style="position:absolute;left:964px;top:244px;width:13px;height:179px;background:#fff;border:1px solid #b0b0b0;box-sizing:border-box"></div>
<div style="position:absolute;left:963px;top:609px;width:15px;height:12px;background:#fff;border:1px solid #c0c0c0;box-sizing:border-box"></div>
<svg style="position:absolute;left:965px;top:612px" width="10" height="6" viewBox="965 612 10 6"><path d="M966.5 613h7l-3.5 4z" fill="#6a6a6a"/></svg>
<div style="position:absolute;left:980px;top:0px;width:1px;height:621px;background:#017343"></div>
<div style="position:absolute;left:979px;top:156px;width:1px;height:465px;background:#c6c6c6"></div>
<div style="position:absolute;left:0px;top:0px;width:1px;height:621px;background:#017343"></div>
<div style="position:absolute;left:1px;top:264px;width:963px;height:297px;border:3px solid #f00;border-radius:6px;box-sizing:border-box"></div>
<div style="position:absolute;left:548px;top:155px;width:430px;height:89px;background:#fff;border:1px solid #c6c6c6;box-sizing:border-box;box-shadow:1px 2px 3px rgba(0,0,0,0.16)"></div>
<div style="position:absolute;left:556px;top:157px;width:82px;height:68px;border:1px solid #c8c8c8;box-sizing:border-box"></div>
<div style="position:absolute;left:555px;top:155px;width:86px;height:39.5px;background:#c9c9c9;border:3px solid #f00;border-radius:6px;box-sizing:border-box"></div>
<svg style="position:absolute;left:578px;top:158px" width="36" height="34" viewBox="578 158 36 34"><rect x="601.5" y="162.5" width="9.5" height="25" fill="#fff" stroke="#6e6e6e" stroke-width="1.2"/><path d="M601.5 167.5h9.5" stroke="#6e6e6e" stroke-width="1.2"/><path d="M601.5 172.5h9.5" stroke="#6e6e6e" stroke-width="1.2"/><path d="M601.5 177.5h9.5" stroke="#6e6e6e" stroke-width="1.2"/><path d="M601.5 182.5h9.5" stroke="#6e6e6e" stroke-width="1.2"/><path d="M604 165.5h4" stroke="#1f6fb5" stroke-width="1.3"/><path d="M604 170.5h4" stroke="#1f6fb5" stroke-width="1.3"/><path d="M604 175.5h4" stroke="#1f6fb5" stroke-width="1.3"/><path d="M604 180.5h4" stroke="#1f6fb5" stroke-width="1.3"/><path d="M604 185.5h4" stroke="#1f6fb5" stroke-width="1.3"/><path d="M599.8 162.6h-5.4v6M594.4 180.2v7.4h5.4" fill="none" stroke="#6e6e6e" stroke-width="1.2"/><rect x="590.6" y="170.6" width="7.8" height="7.8" fill="#fff" stroke="#6e6e6e" stroke-width="1.2"/><path d="M594.5 172v5M592 174.5h5" stroke="#555" stroke-width="1"/><path d="M581 165h9.5" stroke="#5aaa8f" stroke-width="2.2"/><path d="M586.2 161.2l4.2 3.8-4.2 3.8" fill="none" stroke="#5aaa8f" stroke-width="2.2"/></svg>
<svg style="position:absolute;left:670px;top:158px" width="36" height="34" viewBox="670 158 36 34"><rect x="692.5" y="162.5" width="9.5" height="25" fill="#fff" stroke="#6e6e6e" stroke-width="1.2"/><path d="M692.5 167.5h9.5" stroke="#6e6e6e" stroke-width="1.2"/><path d="M692.5 172.5h9.5" stroke="#6e6e6e" stroke-width="1.2"/><path d="M692.5 177.5h9.5" stroke="#6e6e6e" stroke-width="1.2"/><path d="M692.5 182.5h9.5" stroke="#6e6e6e" stroke-width="1.2"/><path d="M695 165.5h4" stroke="#1f6fb5" stroke-width="1.3"/><path d="M695 170.5h4" stroke="#1f6fb5" stroke-width="1.3"/><path d="M695 175.5h4" stroke="#1f6fb5" stroke-width="1.3"/><path d="M695 180.5h4" stroke="#1f6fb5" stroke-width="1.3"/><path d="M695 185.5h4" stroke="#1f6fb5" stroke-width="1.3"/><path d="M690.8 162.6h-5.4v6M685.4 180.2v7.4h5.4" fill="none" stroke="#6e6e6e" stroke-width="1.2"/><rect x="681.6" y="170.6" width="7.8" height="7.8" fill="#fff" stroke="#f05a28" stroke-width="1.3"/><path d="M682.2 177.8l6.6-6.6" stroke="#f05a28" stroke-width="1.3"/><path d="M672.5 164.7h10.5" stroke="#5aaa8f" stroke-width="2.2"/><path d="M677 161l-4.3 3.7 4.3 3.7" fill="none" stroke="#5aaa8f" stroke-width="2.2"/></svg>
<svg style="position:absolute;left:770px;top:160px" width="33" height="30" viewBox="770 160 33 30"><path d="M780.5 162.6h-4.2v5" fill="none" stroke="#6e6e6e" stroke-width="1.2"/><rect x="772.6" y="169.6" width="7.8" height="7.8" fill="#fff" stroke="#6e6e6e" stroke-width="1.2"/><path d="M776.5 171v5M774 173.5h5" stroke="#555"/><rect x="772.6" y="179.6" width="7.8" height="7.8" fill="#fff" stroke="#6e6e6e" stroke-width="1.2"/><path d="M776.5 181v5M774 183.5h5" stroke="#555"/><rect x="782.6" y="162.6" width="18" height="25" fill="#fff" stroke="#6e6e6e" stroke-width="1.2"/><path d="M782.6 167.6h18M782.6 172.6h18M782.6 177.6h18M782.6 182.6h18M791.6 162.6v25" stroke="#6e6e6e" stroke-width="1.2"/><path d="M785 165.5h4M785 170.5h4M785 180.5h4" stroke="#1f6fb5" stroke-width="1.3"/><path d="M785 175.5h4M785 185.5h4M794.5 175.5h4M794.5 185.5h4" stroke="#f08a3c" stroke-width="1.3"/></svg>
<div class="t" style="left:556.89px;top:197.00px;font-size:11.5px;color:#262626;font-weight:400;transform:scaleX(1.0692);transform-origin:0 0;">Группировать</div>
<svg style="position:absolute;left:593px;top:215px" width="7" height="5" viewBox="593 215 7 5"><path d="M594 216h5l-2.5 3z" fill="#616161"/></svg>
<div class="t" style="left:639.92px;top:197.00px;font-size:11.5px;color:#262626;font-weight:400;transform:scaleX(1.0379);transform-origin:0 0;">Разгруппировать</div>
<svg style="position:absolute;left:684px;top:215px" width="7" height="5" viewBox="684 215 7 5"><path d="M685.2 216h5l-2.5 3z" fill="#616161"/></svg>
<div class="t" style="left:738.68px;top:196.80px;font-size:11.5px;color:#262626;font-weight:400;transform:scaleX(1.0948);transform-origin:0 0;">Промежуточный</div>
<div class="t" style="left:775.15px;top:212.00px;font-size:11.5px;color:#262626;font-weight:400;transform:scaleX(1.0687);transform-origin:0 0;">итог</div>
<div class="t" style="left:728.24px;top:231.80px;font-size:11.5px;color:#262626;font-weight:400;transform:scaleX(0.9597);transform-origin:0 0;">Структура</div>
<svg style="position:absolute;left:839px;top:158px" width="18" height="40" viewBox="839 158 18 40"><path d="M841 163.8h5.6M843.8 161v5.6" stroke="#c4c4c4" stroke-width="1.8"/><path d="M847 160.5h8M847 166.5h8M847 172.5h8" stroke="#bdbdbd" stroke-width="1.1"/><path d="M851 162.5h4M851 164.5h4M851 168.5h4M851 170.5h4" stroke="#cfcfcf" stroke-width="0.9"/><path d="M841 187h6" stroke="#c4c4c4" stroke-width="1.8"/><path d="M847 183.5h8M847 189.5h8M847 195.5h8" stroke="#bdbdbd" stroke-width="1.1"/><path d="M851 185.5h4M851 187.5h4M851 191.5h4M851 193.5h4" stroke="#cfcfcf" stroke-width="0.9"/></svg>
<div class="t" style="left:859.46px;top:163.00px;font-size:11.5px;color:#b4b4b4;font-weight:400;transform:scaleX(0.9961);transform-origin:0 0;">Отобразить детали</div>
<div class="t" style="left:859.41px;top:186.00px;font-size:11.5px;color:#b4b4b4;font-weight:400;transform:scaleX(1.0041);transform-origin:0 0;">Скрыть детали</div>
<svg style="position:absolute;left:964px;top:231px" width="12" height="12" viewBox="964 231 12 12"><path d="M966.5 240.5v-7h7" fill="none" stroke="#555" stroke-width="1.1"/><path d="M969 236l4 4M970 240.5h3.5v-3.5" fill="none" stroke="#555" stroke-width="1.1"/></svg>
</body></html>
